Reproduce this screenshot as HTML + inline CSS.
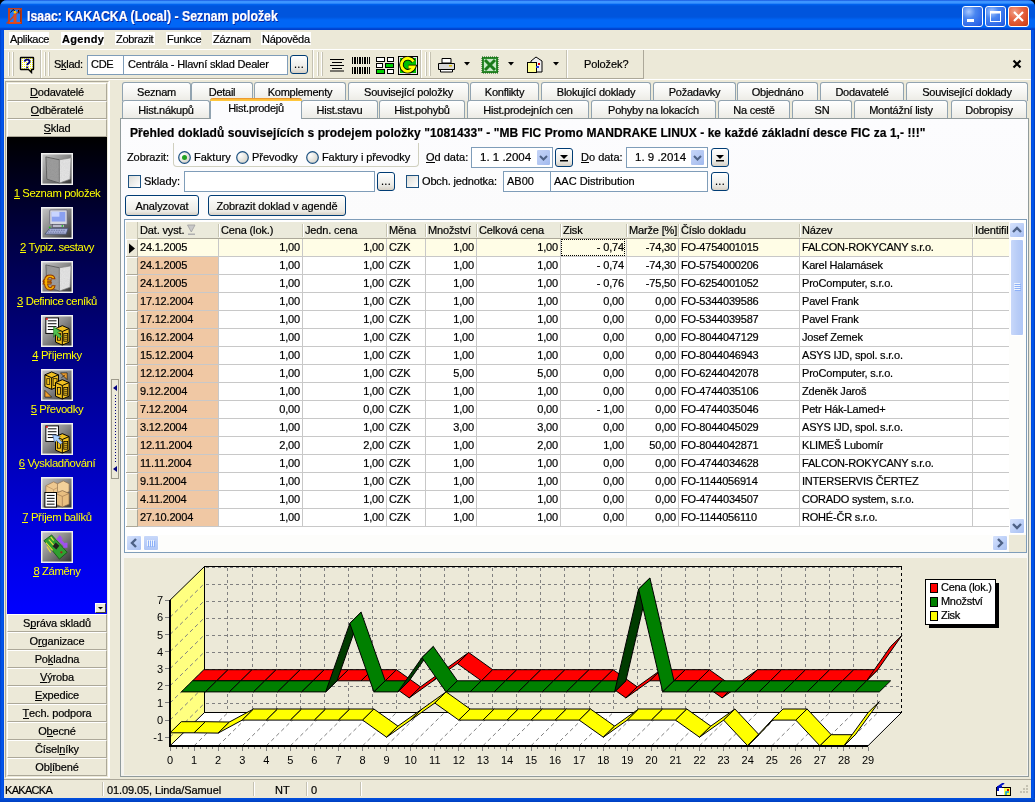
<!DOCTYPE html><html><head><meta charset="utf-8"><style>
*{box-sizing:border-box}
html,body{margin:0;padding:0}
body{width:1035px;height:802px;overflow:hidden;background:#000;font-family:"Liberation Sans",sans-serif;font-size:11px;color:#000;position:relative}
.a{position:absolute}
.t{position:absolute;white-space:nowrap;line-height:13px;-webkit-text-stroke:0.2px currentColor}
u{text-decoration:none;border-bottom:1px solid currentColor;line-height:10px;display:inline-block}
</style></head><body><div style="position:absolute;left:0;top:0;width:1035px;height:802px;will-change:transform"><div class="a" style="left:0px;top:0px;width:1035px;height:802px;background:#0050E6;border-radius:7px 7px 0 0;"></div>
<div class="a" style="left:0px;top:30px;width:4px;height:772px;background:linear-gradient(to right,#0040C8,#0058F0 50%,#0048DC);"></div>
<div class="a" style="left:1031px;top:30px;width:4px;height:772px;background:linear-gradient(to right,#0048DC,#0058F0 50%,#0038B8);"></div>
<div class="a" style="left:0px;top:798px;width:1035px;height:4px;background:linear-gradient(to bottom,#0050E0,#0040C0);"></div>
<div class="a" style="left:0px;top:0px;width:1035px;height:30px;border-radius:7px 7px 0 0;background:linear-gradient(to bottom,#0A3FD4 0px,#3D95FF 1px,#3D95FF 3px,#0062EE 4.5px,#0055DD 6px,#0055DD 17px,#0066F6 20px,#0066F6 27px,#0048D4 28.5px,#003CC8 30px);"></div>
<svg class="a" style="left:0px;top:0px" width="30" height="30" viewBox="0 0 30 30">
<rect x="9" y="8.75" width="12.25" height="14.5" fill="#1F78F8" stroke="#C8401C" stroke-width="1.5"/>
<rect x="8" y="8" width="2" height="16" fill="#C8401C"/><rect x="20" y="8" width="1.5" height="16" fill="#A03010"/>
<path d="M6.5 23.5 L21.5 8.5" stroke="#C8401C" stroke-width="1.2"/>
<path d="M10.5 12.5 L13 9.5 L15 11 M18.5 10 L19 13.5" stroke="#101010" stroke-width="1" fill="none"/>
<rect x="13.5" y="14" width="3" height="9" fill="#E04A20"/><rect x="9" y="22" width="12" height="1.5" fill="#E04A20"/>
<circle cx="15" cy="12.2" r="1.4" fill="#FFD000"/>
</svg>
<div class="t" style="left:27px;top:8px;color:#fff;font-weight:bold;font-size:14px;line-height:17px;transform:scaleX(0.88);transform-origin:0 0;text-shadow:1px 1px 0 #0A1E9C;">Isaac: KAKACKA (Local) - Seznam položek</div>
<div class="a" style="left:962px;top:6px;width:21px;height:21px;border:1px solid #fff;border-radius:3px;background:radial-gradient(circle at 30% 25%,#A8C8FF 0%,#4A86F0 35%,#2A64E8 80%,#1E50D0 100%)"><svg width="21" height="21" style="position:absolute;left:-1px;top:-1px"><rect x="5" y="13" width="7" height="3" fill="#fff"/></svg></div>
<div class="a" style="left:985px;top:6px;width:21px;height:21px;border:1px solid #fff;border-radius:3px;background:radial-gradient(circle at 30% 25%,#A8C8FF 0%,#4A86F0 35%,#2A64E8 80%,#1E50D0 100%)"><svg width="21" height="21" style="position:absolute;left:-1px;top:-1px"><rect x="5.5" y="5.5" width="10" height="10" fill="none" stroke="#fff" stroke-width="1"/><rect x="5" y="5" width="11" height="2.5" fill="#fff"/></svg></div>
<div class="a" style="left:1008px;top:6px;width:21px;height:21px;border:1px solid #fff;border-radius:3px;background:radial-gradient(circle at 30% 25%,#F0A088 0%,#E86A48 35%,#D6471F 80%,#C03A10 100%)"><svg width="21" height="21" style="position:absolute;left:-1px;top:-1px"><path d="M6 6 L15 15 M15 6 L6 15" stroke="#fff" stroke-width="2.2"/></svg></div>
<div class="a" style="left:4px;top:30px;width:1027px;height:768px;background:#ECE9D8;"></div>
<div class="a" style="left:9px;top:32px;width:40px;height:13px;background:#fff;"></div>
<div class="t" style="left:10px;top:33px;letter-spacing:-0.3px;">Aplikace</div>
<div class="a" style="left:61px;top:32px;width:43px;height:13px;background:#fff;"></div>
<div class="t" style="left:62px;top:33px;font-weight:bold;letter-spacing:0.3px;">Agendy</div>
<div class="a" style="left:115px;top:32px;width:40px;height:13px;background:#fff;"></div>
<div class="t" style="left:116px;top:33px;letter-spacing:-0.3px;">Zobrazit</div>
<div class="a" style="left:166px;top:32px;width:35px;height:13px;background:#fff;"></div>
<div class="t" style="left:167px;top:33px;letter-spacing:-0.3px;">Funkce</div>
<div class="a" style="left:212px;top:32px;width:38px;height:13px;background:#fff;"></div>
<div class="t" style="left:213px;top:33px;letter-spacing:-0.3px;">Záznam</div>
<div class="a" style="left:261px;top:32px;width:50px;height:13px;background:#fff;"></div>
<div class="t" style="left:262px;top:33px;letter-spacing:-0.3px;">Nápověda</div>
<div class="a" style="left:4px;top:49px;width:1027px;height:1px;background:#fff;"></div>
<div class="a" style="left:4px;top:78px;width:640px;height:1px;background:#ACA899;"></div>
<div class="a" style="left:4px;top:79px;width:1027px;height:1px;background:#fff;"></div>
<div class="a" style="left:40px;top:50px;width:1px;height:28px;background:#C5C2B2;"></div>
<div class="a" style="left:41px;top:50px;width:1px;height:28px;background:#fff;"></div>
<div class="a" style="left:312px;top:50px;width:1px;height:28px;background:#C5C2B2;"></div>
<div class="a" style="left:313px;top:50px;width:1px;height:28px;background:#fff;"></div>
<div class="a" style="left:420px;top:50px;width:1px;height:28px;background:#C5C2B2;"></div>
<div class="a" style="left:421px;top:50px;width:1px;height:28px;background:#fff;"></div>
<div class="a" style="left:566px;top:50px;width:1px;height:28px;background:#C5C2B2;"></div>
<div class="a" style="left:567px;top:50px;width:1px;height:28px;background:#fff;"></div>
<div class="a" style="left:8px;top:52px;width:2px;height:24px;border-left:1px solid #fff;border-right:1px solid #C5C2B2;"></div>
<div class="a" style="left:12px;top:52px;width:2px;height:24px;border-left:1px solid #fff;border-right:1px solid #C5C2B2;"></div>
<div class="a" style="left:44px;top:52px;width:2px;height:24px;border-left:1px solid #fff;border-right:1px solid #C5C2B2;"></div>
<div class="a" style="left:48px;top:52px;width:2px;height:24px;border-left:1px solid #fff;border-right:1px solid #C5C2B2;"></div>
<div class="a" style="left:317px;top:52px;width:2px;height:24px;border-left:1px solid #fff;border-right:1px solid #C5C2B2;"></div>
<div class="a" style="left:321px;top:52px;width:2px;height:24px;border-left:1px solid #fff;border-right:1px solid #C5C2B2;"></div>
<div class="a" style="left:425px;top:52px;width:2px;height:24px;border-left:1px solid #fff;border-right:1px solid #C5C2B2;"></div>
<div class="a" style="left:429px;top:52px;width:2px;height:24px;border-left:1px solid #fff;border-right:1px solid #C5C2B2;"></div>
<div class="a" style="left:643px;top:50px;width:1px;height:29px;background:#ACA899;"></div>
<svg class="a" style="left:18px;top:54px" width="18" height="20" viewBox="0 0 18 20">
<defs><pattern id="ydots" width="2" height="2" patternUnits="userSpaceOnUse"><rect width="2" height="2" fill="#fff"/><rect x="0" y="0" width="1" height="1" fill="#FFFF00"/></pattern></defs>
<path d="M3 3.5 H15 Q15.5 3.5 15.5 4 V15 Q15.5 15.5 15 15.5 H13.5 L13.5 18.5 L10.5 15.5 H3 Q2.5 15.5 2.5 15 V4 Q2.5 3.5 3 3.5Z" fill="url(#ydots)" stroke="#000" stroke-width="1.4"/>
<path d="M6.6 7.6 Q7 5.6 9.2 5.6 Q11.6 5.6 11.6 7.5 Q11.6 8.8 10 9.6 Q9.2 10.1 9.2 11.3" fill="none" stroke="#000080" stroke-width="1.9"/>
<rect x="8.2" y="12.6" width="2" height="1.6" fill="#000080"/>
</svg>
<div class="t" style="left:54px;top:58px;font-size:11px;letter-spacing:-0.3px;">S<u>k</u>lad:</div>
<div class="a" style="left:87px;top:55px;width:37px;height:20px;background:#fff;border:1px solid #7F9DB9;"></div>
<div class="t" style="left:91px;top:58px;font-size:11px;letter-spacing:-0.3px;">CDE</div>
<div class="a" style="left:123px;top:55px;width:165px;height:20px;background:#fff;border:1px solid #7F9DB9;"></div>
<div class="t" style="left:128px;top:58px;font-size:11px;letter-spacing:-0.2px;">Centrála - Hlavní sklad Dealer</div>
<div class="a" style="left:290px;top:55px;width:18px;height:19px;border:1px solid #003C74;border-radius:3px;background:linear-gradient(to bottom,#fff,#ECEBE6 70%,#D6D0C5);"><div class="t" style="left:0;top:2px;width:16px;text-align:center;font-size:11px;letter-spacing:0.3px">...</div></div>
<svg class="a" style="left:329px;top:58px" width="16" height="14" viewBox="0 0 16 14">
<path d="M1 1.5H15M3 4.5H13M1 7.5H15M3 10.5H13M1 13H15" stroke="#000" stroke-width="1.2"/></svg>
<svg class="a" style="left:351px;top:56px" width="20" height="19" viewBox="0 0 20 19">
<g fill="#000"><rect x="1" y="1" width="1" height="7"/><rect x="3" y="1" width="2" height="7"/><rect x="6" y="1" width="1" height="7"/><rect x="8" y="1" width="2" height="7"/><rect x="11" y="1" width="1" height="7"/><rect x="13" y="1" width="2" height="7"/><rect x="16" y="1" width="1" height="7"/><rect x="18" y="1" width="1" height="7"/>
<rect x="1" y="11" width="1" height="7"/><rect x="3" y="11" width="2" height="7"/><rect x="6" y="11" width="1" height="7"/><rect x="8" y="11" width="2" height="7"/><rect x="11" y="11" width="1" height="7"/><rect x="13" y="11" width="2" height="7"/><rect x="16" y="11" width="1" height="7"/><rect x="18" y="11" width="1" height="7"/></g></svg>
<svg class="a" style="left:375px;top:56px" width="20" height="19" viewBox="0 0 20 19">
<g stroke="#000" stroke-width="1"><rect x="1.5" y="1.5" width="8" height="4" fill="#fff"/><rect x="12.5" y="1.5" width="6" height="4" fill="#fff"/>
<rect x="1.5" y="7.5" width="6" height="4" fill="#fff"/><rect x="10.5" y="7.5" width="8" height="4" fill="#00D000"/>
<rect x="1.5" y="13.5" width="8" height="4" fill="#00D000"/><rect x="12.5" y="13.5" width="6" height="4" fill="#fff"/></g></svg>
<svg class="a" style="left:398px;top:56px" width="20" height="19" viewBox="0 0 20 19">
<rect x="0.5" y="0.5" width="19" height="18" fill="#E8E8E8" stroke="#000"/><rect x="2" y="2" width="16" height="15" fill="#00C000"/>
<path d="M15.5 5.5 A6.5 6.5 0 1 0 16 11 H10.5" fill="none" stroke="#000" stroke-width="4.6"/>
<path d="M15.5 5.5 A6.5 6.5 0 1 0 16 11 H10.5" fill="none" stroke="#FFFF00" stroke-width="2.8"/></svg>
<svg class="a" style="left:437px;top:57px" width="19" height="16" viewBox="0 0 19 16">
<path d="M5 1.5H14V6H5Z" fill="#fff" stroke="#000"/><path d="M1.5 6.5H17.5V12.5H1.5Z" fill="#D8D8D8" stroke="#000"/>
<path d="M3.5 12.5H15.5V15H3.5Z" fill="#fff" stroke="#000"/><rect x="12" y="8" width="3" height="1.5" fill="#E0C000"/></svg>
<svg class="a" style="left:464px;top:62px" width="6" height="4"><path d="M0 0H6L3 3.5Z" fill="#000"/></svg>
<svg class="a" style="left:508px;top:62px" width="6" height="4"><path d="M0 0H6L3 3.5Z" fill="#000"/></svg>
<svg class="a" style="left:553px;top:62px" width="6" height="4"><path d="M0 0H6L3 3.5Z" fill="#000"/></svg>
<svg class="a" style="left:481px;top:56px" width="18" height="18" viewBox="0 0 18 18">
<rect x="1" y="1" width="16" height="16" fill="#2A8A2A" stroke="#0A5A0A" stroke-dasharray="1 1"/><rect x="3" y="3" width="12" height="12" fill="#C8E8C8"/>
<path d="M4 4L14 14M14 4L4 14" stroke="#1A7A1A" stroke-width="3"/></svg>
<svg class="a" style="left:526px;top:56px" width="17" height="18" viewBox="0 0 17 18">
<path d="M5 5L10 1L16 5V16H5Z" fill="#F0F0F0" stroke="#000"/><rect x="1.5" y="6.5" width="9" height="10" fill="#FFFF90" stroke="#000"/>
<rect x="12" y="7" width="2" height="2" fill="#E00000"/><rect x="10" y="10" width="3" height="2" fill="#2040E0"/></svg>
<div class="t" style="left:584px;top:58px;font-size:11px;letter-spacing:-0.1px;">Položek?</div>
<svg class="a" style="left:1012px;top:59px" width="10" height="10" viewBox="0 0 10 10"><path d="M1.5 1.5L8.5 8.5M8.5 1.5L1.5 8.5" stroke="#000" stroke-width="2.2"/></svg>
<div class="a" style="left:4px;top:779px;width:1027px;height:1px;background:#ACA899;"></div>
<div class="a" style="left:4px;top:780px;width:1027px;height:18px;background:#ECE9D8;"></div>
<div class="a" style="left:102px;top:782px;width:1px;height:14px;background:#C5C2B2;"></div>
<div class="a" style="left:103px;top:782px;width:1px;height:14px;background:#fff;"></div>
<div class="a" style="left:253px;top:782px;width:1px;height:14px;background:#C5C2B2;"></div>
<div class="a" style="left:254px;top:782px;width:1px;height:14px;background:#fff;"></div>
<div class="a" style="left:306px;top:782px;width:1px;height:14px;background:#C5C2B2;"></div>
<div class="a" style="left:307px;top:782px;width:1px;height:14px;background:#fff;"></div>
<div class="a" style="left:360px;top:782px;width:1px;height:14px;background:#C5C2B2;"></div>
<div class="a" style="left:361px;top:782px;width:1px;height:14px;background:#fff;"></div>
<div class="t" style="left:5px;top:784px;font-size:11px;letter-spacing:-0.7px;">KAKACKA</div>
<div class="t" style="left:107px;top:784px;font-size:11px;letter-spacing:-0.1px;">01.09.05, Linda/Samuel</div>
<div class="t" style="left:275px;top:784px;font-size:11px;">NT</div>
<div class="t" style="left:311px;top:784px;font-size:11px;">0</div>
<svg class="a" style="left:995px;top:783px" width="17" height="13" viewBox="0 0 17 13">
<rect x="1.5" y="4.5" width="14" height="8" fill="#fff" stroke="#000"/><rect x="9" y="5" width="6" height="7" fill="#FFFF40"/><rect x="12" y="6" width="2" height="2" fill="#E00000"/>
<path d="M3 8 L3 4 L7 4 M3 4 L9 0" stroke="#0010C0" stroke-width="2" fill="none"/><path d="M11 12V9H14" stroke="#00A0E0" stroke-width="1.5" fill="none"/></svg>
<svg class="a" style="left:1017px;top:784px" width="13" height="13"><rect x="9" y="1" width="2" height="2" fill="#C5C2B2"/><rect x="6" y="4" width="2" height="2" fill="#C5C2B2"/><rect x="9" y="4" width="2" height="2" fill="#C5C2B2"/><rect x="3" y="7" width="2" height="2" fill="#C5C2B2"/><rect x="6" y="7" width="2" height="2" fill="#C5C2B2"/><rect x="9" y="7" width="2" height="2" fill="#C5C2B2"/></svg>
<div class="a" style="left:5px;top:81px;width:104px;height:697px;border:1px solid #ACA899;border-right-color:#fff;border-bottom-color:#fff;background:#ECE9D8;"></div>
<div class="a" style="left:7px;top:83px;width:100px;height:18px;background:#ECE9D8;border-top:1px solid #fff;border-left:1px solid #fff;border-bottom:1px solid #ACA899;border-right:1px solid #ACA899;"></div>
<div class="t" style="left:7px;top:86px;width:100px;text-align:center;font-size:11px;letter-spacing:-0.15px;"><u>D</u>odavatelé</div>
<div class="a" style="left:7px;top:101px;width:100px;height:18px;background:#ECE9D8;border-top:1px solid #fff;border-left:1px solid #fff;border-bottom:1px solid #ACA899;border-right:1px solid #ACA899;"></div>
<div class="t" style="left:7px;top:104px;width:100px;text-align:center;font-size:11px;letter-spacing:-0.15px;"><u>O</u>dběratelé</div>
<div class="a" style="left:7px;top:119px;width:100px;height:18px;background:#ECE9D8;border-top:1px solid #fff;border-left:1px solid #fff;border-bottom:1px solid #ACA899;border-right:1px solid #ACA899;"></div>
<div class="t" style="left:7px;top:122px;width:100px;text-align:center;font-size:11px;letter-spacing:-0.15px;"><u>S</u>klad</div>
<div class="a" style="left:7px;top:137px;width:100px;height:477px;background:linear-gradient(to bottom,#000000 0%,#000040 20%,#000090 50%,#0000D8 80%,#0000FF 100%);"></div>
<svg class="a" style="left:41px;top:153px" width="32" height="32" viewBox="0 0 33 33"><defs><linearGradient id="ibg" x1="0" y1="0" x2="1" y2="1"><stop offset="0" stop-color="#C8C8C8"/><stop offset="0.45" stop-color="#8C8C8C"/><stop offset="1" stop-color="#303030"/></linearGradient><filter id="noise"><feTurbulence type="fractalNoise" baseFrequency="0.9" numOctaves="1" result="n"/><feColorMatrix in="n" type="matrix" values="0 0 0 0 0.5  0 0 0 0 0.5  0 0 0 0 0.5  0 0 0 0.35 0"/><feComposite in2="SourceGraphic" operator="in"/><feBlend in2="SourceGraphic" mode="multiply"/></filter></defs><rect x="0.75" y="0.75" width="31.5" height="31.5" fill="url(#ibg)" stroke="#F0F0F0" stroke-width="1.5"/><g filter="url(#noise)"><path d="M5 4 L19 7 L19 31 L6 27Z" fill="#A0A0A0" stroke="#505050" stroke-width="0.8"/><path d="M19 7 L31 5 L30 27 L19 31Z" fill="#E8E8E8" stroke="#707070" stroke-width="0.6"/></g></svg>
<div class="t" style="left:7px;top:187px;width:100px;text-align:center;color:#FFFF00;font-size:11.3px;letter-spacing:-0.4px;-webkit-text-stroke:0;"><u>1</u> Seznam položek</div>
<svg class="a" style="left:41px;top:207px" width="32" height="32" viewBox="0 0 33 33"><defs><linearGradient id="ibg" x1="0" y1="0" x2="1" y2="1"><stop offset="0" stop-color="#C8C8C8"/><stop offset="0.45" stop-color="#8C8C8C"/><stop offset="1" stop-color="#303030"/></linearGradient><filter id="noise"><feTurbulence type="fractalNoise" baseFrequency="0.9" numOctaves="1" result="n"/><feColorMatrix in="n" type="matrix" values="0 0 0 0 0.5  0 0 0 0 0.5  0 0 0 0 0.5  0 0 0 0.35 0"/><feComposite in2="SourceGraphic" operator="in"/><feBlend in2="SourceGraphic" mode="multiply"/></filter></defs><rect x="0.75" y="0.75" width="31.5" height="31.5" fill="url(#ibg)" stroke="#F0F0F0" stroke-width="1.5"/><rect x="9" y="3" width="18" height="15" rx="1" fill="#D8D8E0" stroke="#606070" stroke-width="0.8"/><rect x="11" y="5" width="14" height="10" fill="#8AA0F0"/><rect x="11" y="5" width="8" height="5" fill="#C8D4FF"/><rect x="12" y="18" width="12" height="3" fill="#B8B8C8" stroke="#505060" stroke-width="0.6"/><circle cx="22" cy="19.5" r="0.9" fill="#20C020"/><path d="M4 28 L9 22 L28 22 L26 28Z" fill="#A8B0D8" stroke="#404868" stroke-width="0.8"/><path d="M8 24H25M7 26H25" stroke="#606890" stroke-width="0.8" stroke-dasharray="1.5 1"/><circle cx="9" cy="21" r="1" fill="#20C020"/></svg>
<div class="t" style="left:7px;top:241px;width:100px;text-align:center;color:#FFFF00;font-size:11.3px;letter-spacing:-0.4px;-webkit-text-stroke:0;"><u>2</u> Typiz. sestavy</div>
<svg class="a" style="left:41px;top:261px" width="32" height="32" viewBox="0 0 33 33"><defs><linearGradient id="ibg" x1="0" y1="0" x2="1" y2="1"><stop offset="0" stop-color="#C8C8C8"/><stop offset="0.45" stop-color="#8C8C8C"/><stop offset="1" stop-color="#303030"/></linearGradient><filter id="noise"><feTurbulence type="fractalNoise" baseFrequency="0.9" numOctaves="1" result="n"/><feColorMatrix in="n" type="matrix" values="0 0 0 0 0.5  0 0 0 0 0.5  0 0 0 0 0.5  0 0 0 0.35 0"/><feComposite in2="SourceGraphic" operator="in"/><feBlend in2="SourceGraphic" mode="multiply"/></filter></defs><rect x="0.75" y="0.75" width="31.5" height="31.5" fill="url(#ibg)" stroke="#F0F0F0" stroke-width="1.5"/><g filter="url(#noise)"><path d="M5 4 L19 7 L19 31 L6 27Z" fill="#A0A0A0" stroke="#505050" stroke-width="0.8"/><path d="M19 7 L31 5 L30 27 L19 31Z" fill="#E8E8E8" stroke="#707070" stroke-width="0.6"/></g><text x="2" y="30" font-family="Liberation Sans" font-weight="bold" font-size="23" fill="#F8B000" stroke="#903800" stroke-width="1">€</text></svg>
<div class="t" style="left:7px;top:295px;width:100px;text-align:center;color:#FFFF00;font-size:11.3px;letter-spacing:-0.4px;-webkit-text-stroke:0;"><u>3</u> Definice ceníků</div>
<svg class="a" style="left:41px;top:315px" width="32" height="32" viewBox="0 0 33 33"><defs><linearGradient id="ibg" x1="0" y1="0" x2="1" y2="1"><stop offset="0" stop-color="#C8C8C8"/><stop offset="0.45" stop-color="#8C8C8C"/><stop offset="1" stop-color="#303030"/></linearGradient><filter id="noise"><feTurbulence type="fractalNoise" baseFrequency="0.9" numOctaves="1" result="n"/><feColorMatrix in="n" type="matrix" values="0 0 0 0 0.5  0 0 0 0 0.5  0 0 0 0 0.5  0 0 0 0.35 0"/><feComposite in2="SourceGraphic" operator="in"/><feBlend in2="SourceGraphic" mode="multiply"/></filter></defs><rect x="0.75" y="0.75" width="31.5" height="31.5" fill="url(#ibg)" stroke="#F0F0F0" stroke-width="1.5"/><rect x="5" y="3" width="13" height="16" fill="#fff" stroke="#000" stroke-width="1"/><path d="M7 6H16M7 9H16M7 12H16M7 15H16" stroke="#000" stroke-width="1"/><rect x="5" y="3" width="2" height="2" fill="#E02020"/><path d="M15 14 L22 11 L29 14 L29 28 L22 31 L15 28Z" fill="#F0C020" stroke="#000" stroke-width="1"/><path d="M15 14L22 17L29 14M22 17V31" stroke="#000" stroke-width="1" fill="none"/><rect x="23.5" y="19" width="4" height="8" fill="none" stroke="#000" stroke-width="0.8"/><path d="M24 21H27M24 23H27M24 25H27" stroke="#000" stroke-width="0.7"/><rect x="17" y="19" width="3" height="7" fill="none" stroke="#000" stroke-width="0.8"/><path d="M13 12 L20 17 L17 18 L21 22 L19 24 L15 20 L13 23Z" fill="#50C050" stroke="#207020" stroke-width="0.6"/></svg>
<div class="t" style="left:7px;top:349px;width:100px;text-align:center;color:#FFFF00;font-size:11.3px;letter-spacing:-0.4px;-webkit-text-stroke:0;"><u>4</u> Příjemky</div>
<svg class="a" style="left:41px;top:369px" width="32" height="32" viewBox="0 0 33 33"><defs><linearGradient id="ibg" x1="0" y1="0" x2="1" y2="1"><stop offset="0" stop-color="#C8C8C8"/><stop offset="0.45" stop-color="#8C8C8C"/><stop offset="1" stop-color="#303030"/></linearGradient><filter id="noise"><feTurbulence type="fractalNoise" baseFrequency="0.9" numOctaves="1" result="n"/><feColorMatrix in="n" type="matrix" values="0 0 0 0 0.5  0 0 0 0 0.5  0 0 0 0 0.5  0 0 0 0.35 0"/><feComposite in2="SourceGraphic" operator="in"/><feBlend in2="SourceGraphic" mode="multiply"/></filter></defs><rect x="0.75" y="0.75" width="31.5" height="31.5" fill="url(#ibg)" stroke="#F0F0F0" stroke-width="1.5"/><path d="M4 6 L11 3 L18 6 L18 18 L11 21 L4 18Z" fill="#F0C020" stroke="#000" stroke-width="1"/><path d="M4 6L11 9L18 6M11 9V21" stroke="#000" stroke-width="1" fill="none"/><rect x="6" y="10" width="3" height="6" fill="none" stroke="#000" stroke-width="0.7"/><rect x="12.5" y="10" width="4" height="7" fill="none" stroke="#000" stroke-width="0.7"/><path d="M15 14 L22 11 L29 14 L29 28 L22 31 L15 28Z" fill="#F0C020" stroke="#000" stroke-width="1"/><path d="M15 14L22 17L29 14M22 17V31" stroke="#000" stroke-width="1" fill="none"/><rect x="23.5" y="19" width="4" height="8" fill="none" stroke="#000" stroke-width="0.8"/><path d="M24 21H27M24 23H27M24 25H27" stroke="#000" stroke-width="0.7"/><rect x="17" y="19" width="3" height="7" fill="none" stroke="#000" stroke-width="0.8"/><path d="M20 4 L27 4 L27 11Z M21 9 L25 6" fill="#F0A030" stroke="#000" stroke-width="0.6"/><path d="M4 22 L11 29 L4 29Z" fill="#F0A030" stroke="#000" stroke-width="0.6"/></svg>
<div class="t" style="left:7px;top:403px;width:100px;text-align:center;color:#FFFF00;font-size:11.3px;letter-spacing:-0.4px;-webkit-text-stroke:0;"><u>5</u> Převodky</div>
<svg class="a" style="left:41px;top:423px" width="32" height="32" viewBox="0 0 33 33"><defs><linearGradient id="ibg" x1="0" y1="0" x2="1" y2="1"><stop offset="0" stop-color="#C8C8C8"/><stop offset="0.45" stop-color="#8C8C8C"/><stop offset="1" stop-color="#303030"/></linearGradient><filter id="noise"><feTurbulence type="fractalNoise" baseFrequency="0.9" numOctaves="1" result="n"/><feColorMatrix in="n" type="matrix" values="0 0 0 0 0.5  0 0 0 0 0.5  0 0 0 0 0.5  0 0 0 0.35 0"/><feComposite in2="SourceGraphic" operator="in"/><feBlend in2="SourceGraphic" mode="multiply"/></filter></defs><rect x="0.75" y="0.75" width="31.5" height="31.5" fill="url(#ibg)" stroke="#F0F0F0" stroke-width="1.5"/><rect x="5" y="3" width="13" height="16" fill="#fff" stroke="#000" stroke-width="1"/><path d="M7 6H16M7 9H16M7 12H16M7 15H16" stroke="#000" stroke-width="1"/><rect x="5" y="3" width="2" height="2" fill="#E02020"/><path d="M15 14 L22 11 L29 14 L29 28 L22 31 L15 28Z" fill="#F0C020" stroke="#000" stroke-width="1"/><path d="M15 14L22 17L29 14M22 17V31" stroke="#000" stroke-width="1" fill="none"/><rect x="23.5" y="19" width="4" height="8" fill="none" stroke="#000" stroke-width="0.8"/><path d="M24 21H27M24 23H27M24 25H27" stroke="#000" stroke-width="0.7"/><rect x="17" y="19" width="3" height="7" fill="none" stroke="#000" stroke-width="0.8"/><path d="M12 12 L20 14 L18 16 L22 20 L20 22 L16 18 L14 20Z" fill="#A8D0FF" stroke="#304880" stroke-width="0.6"/></svg>
<div class="t" style="left:7px;top:457px;width:100px;text-align:center;color:#FFFF00;font-size:11.3px;letter-spacing:-0.4px;-webkit-text-stroke:0;"><u>6</u> Vyskladňování</div>
<svg class="a" style="left:41px;top:477px" width="32" height="32" viewBox="0 0 33 33"><defs><linearGradient id="ibg" x1="0" y1="0" x2="1" y2="1"><stop offset="0" stop-color="#C8C8C8"/><stop offset="0.45" stop-color="#8C8C8C"/><stop offset="1" stop-color="#303030"/></linearGradient><filter id="noise"><feTurbulence type="fractalNoise" baseFrequency="0.9" numOctaves="1" result="n"/><feColorMatrix in="n" type="matrix" values="0 0 0 0 0.5  0 0 0 0 0.5  0 0 0 0 0.5  0 0 0 0.35 0"/><feComposite in2="SourceGraphic" operator="in"/><feBlend in2="SourceGraphic" mode="multiply"/></filter></defs><rect x="0.75" y="0.75" width="31.5" height="31.5" fill="url(#ibg)" stroke="#F0F0F0" stroke-width="1.5"/><path d="M5 9 L13 5 L21 9 L21 18 L13 22 L5 18Z" fill="#EEC890" stroke="#907050" stroke-width="0.7"/><path d="M5 9L13 13L21 9M13 13V22" stroke="#B89060" stroke-width="0.7" fill="none"/><path d="M17 7 L23 4 L29 7 L29 15 L23 18 L17 15Z" fill="#F2D09A" stroke="#907050" stroke-width="0.7"/><path d="M15 17 L22 14 L29 17 L29 28 L22 31 L15 28Z" fill="#E8BE80" stroke="#806040" stroke-width="0.7"/><path d="M15 17L22 20L29 17M22 20V31" stroke="#A07850" stroke-width="0.7" fill="none"/><rect x="4" y="16" width="12" height="15" fill="#fff" stroke="#000" stroke-width="1"/><path d="M6 19H14M6 22H14M6 25H14M6 28H14" stroke="#000" stroke-width="1"/></svg>
<div class="t" style="left:7px;top:511px;width:100px;text-align:center;color:#FFFF00;font-size:11.3px;letter-spacing:-0.4px;-webkit-text-stroke:0;"><u>7</u> Příjem balíků</div>
<svg class="a" style="left:41px;top:531px" width="32" height="32" viewBox="0 0 33 33"><defs><linearGradient id="ibg" x1="0" y1="0" x2="1" y2="1"><stop offset="0" stop-color="#C8C8C8"/><stop offset="0.45" stop-color="#8C8C8C"/><stop offset="1" stop-color="#303030"/></linearGradient><filter id="noise"><feTurbulence type="fractalNoise" baseFrequency="0.9" numOctaves="1" result="n"/><feColorMatrix in="n" type="matrix" values="0 0 0 0 0.5  0 0 0 0 0.5  0 0 0 0 0.5  0 0 0 0.35 0"/><feComposite in2="SourceGraphic" operator="in"/><feBlend in2="SourceGraphic" mode="multiply"/></filter></defs><rect x="0.75" y="0.75" width="31.5" height="31.5" fill="url(#ibg)" stroke="#F0F0F0" stroke-width="1.5"/><path d="M3 10 L11 4 L27 22 L19 29Z" fill="#30A030" stroke="#105010" stroke-width="0.8"/><path d="M5 12L12 20M8 9L15 17M6 16L10 22M10 6L13 10" stroke="#E8E040" stroke-width="1.2"/><rect x="13" y="13" width="5" height="5" fill="#202020" transform="rotate(40 15.5 15.5)"/><circle cx="21" cy="22" r="1.2" fill="#A02020"/><path d="M18 8 L26 16 M20 5 L18 8 L22 8 M26 12 L26 16 L23 16" stroke="#A050F0" stroke-width="2.6" fill="none"/></svg>
<div class="t" style="left:7px;top:565px;width:100px;text-align:center;color:#FFFF00;font-size:11.3px;letter-spacing:-0.4px;-webkit-text-stroke:0;"><u>8</u> Záměny</div>
<div class="a" style="left:95px;top:603px;width:11px;height:10px;background:#ECE9D8;border:1px solid #fff;border-right-color:#404040;border-bottom-color:#404040;"><svg width="9" height="8" style="position:absolute;left:0;top:0"><path d="M2 3H7L4.5 5.5Z" fill="#000"/></svg></div>
<div class="a" style="left:7px;top:614px;width:100px;height:18px;background:#ECE9D8;border-top:1px solid #fff;border-left:1px solid #fff;border-bottom:1px solid #ACA899;border-right:1px solid #ACA899;"></div>
<div class="t" style="left:7px;top:617px;width:100px;text-align:center;font-size:11px;letter-spacing:-0.15px;">S<u>p</u>ráva skladů</div>
<div class="a" style="left:7px;top:632px;width:100px;height:18px;background:#ECE9D8;border-top:1px solid #fff;border-left:1px solid #fff;border-bottom:1px solid #ACA899;border-right:1px solid #ACA899;"></div>
<div class="t" style="left:7px;top:635px;width:100px;text-align:center;font-size:11px;letter-spacing:-0.15px;">O<u>r</u>ganizace</div>
<div class="a" style="left:7px;top:650px;width:100px;height:18px;background:#ECE9D8;border-top:1px solid #fff;border-left:1px solid #fff;border-bottom:1px solid #ACA899;border-right:1px solid #ACA899;"></div>
<div class="t" style="left:7px;top:653px;width:100px;text-align:center;font-size:11px;letter-spacing:-0.15px;">Po<u>k</u>ladna</div>
<div class="a" style="left:7px;top:668px;width:100px;height:18px;background:#ECE9D8;border-top:1px solid #fff;border-left:1px solid #fff;border-bottom:1px solid #ACA899;border-right:1px solid #ACA899;"></div>
<div class="t" style="left:7px;top:671px;width:100px;text-align:center;font-size:11px;letter-spacing:-0.15px;"><u>V</u>ýroba</div>
<div class="a" style="left:7px;top:686px;width:100px;height:18px;background:#ECE9D8;border-top:1px solid #fff;border-left:1px solid #fff;border-bottom:1px solid #ACA899;border-right:1px solid #ACA899;"></div>
<div class="t" style="left:7px;top:689px;width:100px;text-align:center;font-size:11px;letter-spacing:-0.15px;"><u>E</u>xpedice</div>
<div class="a" style="left:7px;top:704px;width:100px;height:18px;background:#ECE9D8;border-top:1px solid #fff;border-left:1px solid #fff;border-bottom:1px solid #ACA899;border-right:1px solid #ACA899;"></div>
<div class="t" style="left:7px;top:707px;width:100px;text-align:center;font-size:11px;letter-spacing:-0.15px;"><u>T</u>ech. podpora</div>
<div class="a" style="left:7px;top:722px;width:100px;height:18px;background:#ECE9D8;border-top:1px solid #fff;border-left:1px solid #fff;border-bottom:1px solid #ACA899;border-right:1px solid #ACA899;"></div>
<div class="t" style="left:7px;top:725px;width:100px;text-align:center;font-size:11px;letter-spacing:-0.15px;">O<u>b</u>ecné</div>
<div class="a" style="left:7px;top:740px;width:100px;height:18px;background:#ECE9D8;border-top:1px solid #fff;border-left:1px solid #fff;border-bottom:1px solid #ACA899;border-right:1px solid #ACA899;"></div>
<div class="t" style="left:7px;top:743px;width:100px;text-align:center;font-size:11px;letter-spacing:-0.15px;">Čísel<u>n</u>íky</div>
<div class="a" style="left:7px;top:758px;width:100px;height:18px;background:#ECE9D8;border-top:1px solid #fff;border-left:1px solid #fff;border-bottom:1px solid #ACA899;border-right:1px solid #ACA899;"></div>
<div class="t" style="left:7px;top:761px;width:100px;text-align:center;font-size:11px;letter-spacing:-0.15px;">Ob<u>l</u>íbené</div>
<div class="a" style="left:109px;top:81px;width:1px;height:697px;background:#fff;"></div>
<div class="a" style="left:111px;top:379px;width:8px;height:100px;border:1px solid #9D9A8A;background:#ECE9D8;"><svg width="6" height="98" style="position:absolute;left:0;top:0"><path d="M5 5V11L1 8Z" fill="#000080"/><path d="M5 86V92L1 89Z" fill="#000080"/><rect x="3" y="15" width="1" height="1" fill="#000080"/><rect x="3" y="18" width="1" height="1" fill="#000080"/><rect x="3" y="21" width="1" height="1" fill="#000080"/><rect x="3" y="24" width="1" height="1" fill="#000080"/><rect x="3" y="27" width="1" height="1" fill="#000080"/><rect x="3" y="30" width="1" height="1" fill="#000080"/><rect x="3" y="33" width="1" height="1" fill="#000080"/><rect x="3" y="36" width="1" height="1" fill="#000080"/><rect x="3" y="39" width="1" height="1" fill="#000080"/><rect x="3" y="42" width="1" height="1" fill="#000080"/><rect x="3" y="45" width="1" height="1" fill="#000080"/><rect x="3" y="48" width="1" height="1" fill="#000080"/><rect x="3" y="51" width="1" height="1" fill="#000080"/><rect x="3" y="54" width="1" height="1" fill="#000080"/><rect x="3" y="57" width="1" height="1" fill="#000080"/><rect x="3" y="60" width="1" height="1" fill="#000080"/><rect x="3" y="63" width="1" height="1" fill="#000080"/><rect x="3" y="66" width="1" height="1" fill="#000080"/><rect x="3" y="69" width="1" height="1" fill="#000080"/><rect x="3" y="72" width="1" height="1" fill="#000080"/><rect x="3" y="75" width="1" height="1" fill="#000080"/><rect x="3" y="78" width="1" height="1" fill="#000080"/><rect x="3" y="81" width="1" height="1" fill="#000080"/></svg></div>
<div class="a" style="left:120px;top:118px;width:909px;height:659px;border:1px solid #919B9C;background:linear-gradient(to bottom,#FCFCFE 0%,#F8F8F6 60%,#F4F3EE 100%);"></div>
<div class="a" style="left:122px;top:82px;width:69px;height:19px;border:1px solid #91A3B0;border-bottom:none;border-radius:3px 3px 0 0;background:linear-gradient(to bottom,#FFFFFF 0%,#F6F6F3 50%,#ECEBE5 100%);"></div>
<div class="t" style="left:122px;top:86px;width:69px;text-align:center;font-size:11px;letter-spacing:-0.25px;">Seznam</div>
<div class="a" style="left:191px;top:82px;width:62px;height:19px;border:1px solid #91A3B0;border-bottom:none;border-radius:3px 3px 0 0;background:linear-gradient(to bottom,#FFFFFF 0%,#F6F6F3 50%,#ECEBE5 100%);"></div>
<div class="t" style="left:191px;top:86px;width:62px;text-align:center;font-size:11px;letter-spacing:-0.25px;">Detail</div>
<div class="a" style="left:254px;top:82px;width:92px;height:19px;border:1px solid #91A3B0;border-bottom:none;border-radius:3px 3px 0 0;background:linear-gradient(to bottom,#FFFFFF 0%,#F6F6F3 50%,#ECEBE5 100%);"></div>
<div class="t" style="left:254px;top:86px;width:92px;text-align:center;font-size:11px;letter-spacing:-0.25px;">Komplementy</div>
<div class="a" style="left:348px;top:82px;width:121px;height:19px;border:1px solid #91A3B0;border-bottom:none;border-radius:3px 3px 0 0;background:linear-gradient(to bottom,#FFFFFF 0%,#F6F6F3 50%,#ECEBE5 100%);"></div>
<div class="t" style="left:348px;top:86px;width:121px;text-align:center;font-size:11px;letter-spacing:-0.25px;">Související položky</div>
<div class="a" style="left:470px;top:82px;width:69px;height:19px;border:1px solid #91A3B0;border-bottom:none;border-radius:3px 3px 0 0;background:linear-gradient(to bottom,#FFFFFF 0%,#F6F6F3 50%,#ECEBE5 100%);"></div>
<div class="t" style="left:470px;top:86px;width:69px;text-align:center;font-size:11px;letter-spacing:-0.25px;">Konflikty</div>
<div class="a" style="left:541px;top:82px;width:110px;height:19px;border:1px solid #91A3B0;border-bottom:none;border-radius:3px 3px 0 0;background:linear-gradient(to bottom,#FFFFFF 0%,#F6F6F3 50%,#ECEBE5 100%);"></div>
<div class="t" style="left:541px;top:86px;width:110px;text-align:center;font-size:11px;letter-spacing:-0.25px;">Blokující doklady</div>
<div class="a" style="left:653px;top:82px;width:83px;height:19px;border:1px solid #91A3B0;border-bottom:none;border-radius:3px 3px 0 0;background:linear-gradient(to bottom,#FFFFFF 0%,#F6F6F3 50%,#ECEBE5 100%);"></div>
<div class="t" style="left:653px;top:86px;width:83px;text-align:center;font-size:11px;letter-spacing:-0.25px;">Požadavky</div>
<div class="a" style="left:737px;top:82px;width:81px;height:19px;border:1px solid #91A3B0;border-bottom:none;border-radius:3px 3px 0 0;background:linear-gradient(to bottom,#FFFFFF 0%,#F6F6F3 50%,#ECEBE5 100%);"></div>
<div class="t" style="left:737px;top:86px;width:81px;text-align:center;font-size:11px;letter-spacing:-0.25px;">Objednáno</div>
<div class="a" style="left:820px;top:82px;width:84px;height:19px;border:1px solid #91A3B0;border-bottom:none;border-radius:3px 3px 0 0;background:linear-gradient(to bottom,#FFFFFF 0%,#F6F6F3 50%,#ECEBE5 100%);"></div>
<div class="t" style="left:820px;top:86px;width:84px;text-align:center;font-size:11px;letter-spacing:-0.25px;">Dodavatelé</div>
<div class="a" style="left:906px;top:82px;width:122px;height:19px;border:1px solid #91A3B0;border-bottom:none;border-radius:3px 3px 0 0;background:linear-gradient(to bottom,#FFFFFF 0%,#F6F6F3 50%,#ECEBE5 100%);"></div>
<div class="t" style="left:906px;top:86px;width:122px;text-align:center;font-size:11px;letter-spacing:-0.25px;">Související doklady</div>
<div class="a" style="left:122px;top:100px;width:88px;height:18px;border:1px solid #91A3B0;border-bottom:none;border-radius:3px 3px 0 0;background:linear-gradient(to bottom,#FFFFFF 0%,#F6F6F3 50%,#ECEBE5 100%);"></div>
<div class="t" style="left:122px;top:104px;width:88px;text-align:center;font-size:11px;letter-spacing:-0.25px;">Hist.nákupů</div>
<div class="a" style="left:301px;top:100px;width:77px;height:18px;border:1px solid #91A3B0;border-bottom:none;border-radius:3px 3px 0 0;background:linear-gradient(to bottom,#FFFFFF 0%,#F6F6F3 50%,#ECEBE5 100%);"></div>
<div class="t" style="left:301px;top:104px;width:77px;text-align:center;font-size:11px;letter-spacing:-0.25px;">Hist.stavu</div>
<div class="a" style="left:379px;top:100px;width:86px;height:18px;border:1px solid #91A3B0;border-bottom:none;border-radius:3px 3px 0 0;background:linear-gradient(to bottom,#FFFFFF 0%,#F6F6F3 50%,#ECEBE5 100%);"></div>
<div class="t" style="left:379px;top:104px;width:86px;text-align:center;font-size:11px;letter-spacing:-0.25px;">Hist.pohybů</div>
<div class="a" style="left:467px;top:100px;width:122px;height:18px;border:1px solid #91A3B0;border-bottom:none;border-radius:3px 3px 0 0;background:linear-gradient(to bottom,#FFFFFF 0%,#F6F6F3 50%,#ECEBE5 100%);"></div>
<div class="t" style="left:467px;top:104px;width:122px;text-align:center;font-size:11px;letter-spacing:-0.25px;">Hist.prodejních cen</div>
<div class="a" style="left:591px;top:100px;width:125px;height:18px;border:1px solid #91A3B0;border-bottom:none;border-radius:3px 3px 0 0;background:linear-gradient(to bottom,#FFFFFF 0%,#F6F6F3 50%,#ECEBE5 100%);"></div>
<div class="t" style="left:591px;top:104px;width:125px;text-align:center;font-size:11px;letter-spacing:-0.25px;">Pohyby na lokacích</div>
<div class="a" style="left:718px;top:100px;width:72px;height:18px;border:1px solid #91A3B0;border-bottom:none;border-radius:3px 3px 0 0;background:linear-gradient(to bottom,#FFFFFF 0%,#F6F6F3 50%,#ECEBE5 100%);"></div>
<div class="t" style="left:718px;top:104px;width:72px;text-align:center;font-size:11px;letter-spacing:-0.25px;">Na cestě</div>
<div class="a" style="left:792px;top:100px;width:60px;height:18px;border:1px solid #91A3B0;border-bottom:none;border-radius:3px 3px 0 0;background:linear-gradient(to bottom,#FFFFFF 0%,#F6F6F3 50%,#ECEBE5 100%);"></div>
<div class="t" style="left:792px;top:104px;width:60px;text-align:center;font-size:11px;letter-spacing:-0.25px;">SN</div>
<div class="a" style="left:854px;top:100px;width:94px;height:18px;border:1px solid #91A3B0;border-bottom:none;border-radius:3px 3px 0 0;background:linear-gradient(to bottom,#FFFFFF 0%,#F6F6F3 50%,#ECEBE5 100%);"></div>
<div class="t" style="left:854px;top:104px;width:94px;text-align:center;font-size:11px;letter-spacing:-0.25px;">Montážní listy</div>
<div class="a" style="left:951px;top:100px;width:76px;height:18px;border:1px solid #91A3B0;border-bottom:none;border-radius:3px 3px 0 0;background:linear-gradient(to bottom,#FFFFFF 0%,#F6F6F3 50%,#ECEBE5 100%);"></div>
<div class="t" style="left:951px;top:104px;width:76px;text-align:center;font-size:11px;letter-spacing:-0.25px;">Dobropisy</div>
<div class="a" style="left:210px;top:98px;width:92px;height:21px;border:1px solid #91A3B0;border-bottom:none;border-top:none;border-radius:3px 3px 0 0;background:#FCFCFE;"></div>
<div class="a" style="left:210px;top:98px;width:92px;height:3px;border-radius:3px 3px 0 0;background:linear-gradient(to bottom,#E68B2C,#FFC73C 60%,#FFC73C);"></div>
<div class="t" style="left:210px;top:102px;width:92px;text-align:center;font-size:11px;letter-spacing:-0.25px;">Hist.prodejů</div>
<div class="t" style="left:130px;top:127px;font-weight:bold;font-size:12px;letter-spacing:0.07px;">Přehled dokladů souvisejících s prodejem položky "1081433" - "MB FIC Promo MANDRAKE LINUX - ke každé základní desce FIC za 1,- !!!"</div>
<div class="t" style="left:127px;top:151px;font-size:11px;letter-spacing:-0.1px;">Zobrazit:</div>
<div class="a" style="left:173px;top:143px;width:246px;height:24px;border:1px solid #D0D0BF;border-top:none;border-radius:0 0 4px 4px;"></div>
<svg class="a" style="left:178px;top:151px" width="13" height="13"><defs><radialGradient id="rg178" cx="0.3" cy="0.3" r="0.8"><stop offset="0" stop-color="#fff"/><stop offset="1" stop-color="#D4D2C8"/></radialGradient></defs><circle cx="6.5" cy="6.5" r="5.8" fill="url(#rg178)" stroke="#1C5180" stroke-width="1.2"/><circle cx="6.5" cy="6.5" r="2.5" fill="#21A121"/></svg>
<div class="t" style="left:194px;top:151px;font-size:11px;">Faktury</div>
<svg class="a" style="left:236px;top:151px" width="13" height="13"><defs><radialGradient id="rg236" cx="0.3" cy="0.3" r="0.8"><stop offset="0" stop-color="#fff"/><stop offset="1" stop-color="#D4D2C8"/></radialGradient></defs><circle cx="6.5" cy="6.5" r="5.8" fill="url(#rg236)" stroke="#1C5180" stroke-width="1.2"/></svg>
<div class="t" style="left:252px;top:151px;font-size:11px;">Převodky</div>
<svg class="a" style="left:306px;top:151px" width="13" height="13"><defs><radialGradient id="rg306" cx="0.3" cy="0.3" r="0.8"><stop offset="0" stop-color="#fff"/><stop offset="1" stop-color="#D4D2C8"/></radialGradient></defs><circle cx="6.5" cy="6.5" r="5.8" fill="url(#rg306)" stroke="#1C5180" stroke-width="1.2"/></svg>
<div class="t" style="left:322px;top:151px;font-size:11px;letter-spacing:-0.1px;">Faktury i převodky</div>
<div class="t" style="left:426px;top:151px;font-size:11px;"><u>O</u>d data:</div>
<div class="a" style="left:471px;top:147px;width:82px;height:21px;background:#fff;border:1px solid #7F9DB9;"></div>
<div class="t" style="left:480px;top:151px;font-size:11.5px;">1. 1 .2004</div>
<div class="a" style="left:536px;top:149px;width:15px;height:17px;border:1px solid #fff;border-radius:2px;background:linear-gradient(135deg,#C5D4F7,#B2C6F2 60%,#A0B8EE);"><svg width="13" height="15" style="position:absolute;left:0;top:0"><path d="M3 6L6.5 9.5L10 6" stroke="#4D6185" stroke-width="2" fill="none"/></svg></div>
<div class="a" style="left:555px;top:148px;width:18px;height:19px;border:1px solid #003C74;border-radius:3px;background:linear-gradient(to bottom,#fff,#ECEBE6 70%,#D6D0C5);"><svg width="16" height="17" style="position:absolute;left:0;top:0"><path d="M4 6H12L8 10Z" fill="#000"/><rect x="4" y="11" width="8" height="1.5" fill="#000"/></svg></div>
<div class="t" style="left:581px;top:151px;font-size:11px;"><u>D</u>o data:</div>
<div class="a" style="left:626px;top:147px;width:82px;height:21px;background:#fff;border:1px solid #7F9DB9;"></div>
<div class="t" style="left:635px;top:151px;font-size:11.5px;">1. 9 .2014</div>
<div class="a" style="left:690px;top:149px;width:15px;height:17px;border:1px solid #fff;border-radius:2px;background:linear-gradient(135deg,#C5D4F7,#B2C6F2 60%,#A0B8EE);"><svg width="13" height="15" style="position:absolute;left:0;top:0"><path d="M3 6L6.5 9.5L10 6" stroke="#4D6185" stroke-width="2" fill="none"/></svg></div>
<div class="a" style="left:711px;top:148px;width:18px;height:19px;border:1px solid #003C74;border-radius:3px;background:linear-gradient(to bottom,#fff,#ECEBE6 70%,#D6D0C5);"><svg width="16" height="17" style="position:absolute;left:0;top:0"><path d="M4 6H12L8 10Z" fill="#000"/><rect x="4" y="11" width="8" height="1.5" fill="#000"/></svg></div>
<div class="a" style="left:128px;top:175px;width:13px;height:13px;border:1px solid #1C5180;background:linear-gradient(135deg,#DCDCD7,#fff);"></div>
<div class="t" style="left:144px;top:175px;font-size:11px;">Sklady:</div>
<div class="a" style="left:184px;top:171px;width:191px;height:21px;background:#fff;border:1px solid #7F9DB9;"></div>
<div class="a" style="left:377px;top:172px;width:18px;height:19px;border:1px solid #003C74;border-radius:3px;background:linear-gradient(to bottom,#fff,#ECEBE6 70%,#D6D0C5);"><div class="t" style="left:0;top:2px;width:16px;text-align:center;font-size:11px;letter-spacing:0.3px">...</div></div>
<div class="a" style="left:406px;top:175px;width:13px;height:13px;border:1px solid #1C5180;background:linear-gradient(135deg,#DCDCD7,#fff);"></div>
<div class="t" style="left:422px;top:175px;font-size:11px;letter-spacing:-0.15px;">Obch. jednotka:</div>
<div class="a" style="left:503px;top:171px;width:48px;height:21px;background:#fff;border:1px solid #7F9DB9;"></div>
<div class="t" style="left:507px;top:175px;font-size:11px;">AB00</div>
<div class="a" style="left:550px;top:171px;width:158px;height:21px;background:#fff;border:1px solid #7F9DB9;"></div>
<div class="t" style="left:554px;top:175px;font-size:11px;">AAC Distribution</div>
<div class="a" style="left:711px;top:172px;width:18px;height:19px;border:1px solid #003C74;border-radius:3px;background:linear-gradient(to bottom,#fff,#ECEBE6 70%,#D6D0C5);"><div class="t" style="left:0;top:2px;width:16px;text-align:center;font-size:11px;letter-spacing:0.3px">...</div></div>
<div class="a" style="left:125px;top:195px;width:74px;height:21px;border:1px solid #003C74;border-radius:3px;background:linear-gradient(to bottom,#FFFFFF 0%,#F4F4F0 40%,#ECEBE6 80%,#D6D0C5 100%);"><div class="t" style="left:0;top:4px;width:72px;text-align:center;font-size:11px;letter-spacing:-0.1px">Analyzovat</div></div>
<div class="a" style="left:208px;top:195px;width:138px;height:21px;border:1px solid #003C74;border-radius:3px;background:linear-gradient(to bottom,#FFFFFF 0%,#F4F4F0 40%,#ECEBE6 80%,#D6D0C5 100%);"><div class="t" style="left:0;top:4px;width:136px;text-align:center;font-size:11px;letter-spacing:-0.1px">Zobrazit doklad v agendě</div></div>
<div class="a" style="left:124px;top:219px;width:903px;height:334px;border:1px solid #7F9DB9;background:#fff;"></div>
<div class="a" style="left:126px;top:222px;width:883px;height:17px;background:#EBEADB;border-bottom:1px solid #ACA899;"></div>
<div class="a" style="left:126px;top:222px;width:12px;height:17px;background:#ECE9D8;border-right:1px solid #C7C5B2;"></div>
<div class="a" style="left:218px;top:224px;width:1px;height:13px;background:#C7C5B2;"></div>
<div class="a" style="left:219px;top:224px;width:1px;height:13px;background:#fff;"></div>
<div class="t" style="left:140px;top:224px;font-size:11px;letter-spacing:-0.15px;">Dat. vyst.</div>
<div class="a" style="left:302px;top:224px;width:1px;height:13px;background:#C7C5B2;"></div>
<div class="a" style="left:303px;top:224px;width:1px;height:13px;background:#fff;"></div>
<div class="t" style="left:221px;top:224px;font-size:11px;letter-spacing:-0.15px;">Cena (lok.)</div>
<div class="a" style="left:386px;top:224px;width:1px;height:13px;background:#C7C5B2;"></div>
<div class="a" style="left:387px;top:224px;width:1px;height:13px;background:#fff;"></div>
<div class="t" style="left:305px;top:224px;font-size:11px;letter-spacing:-0.15px;">Jedn. cena</div>
<div class="a" style="left:425px;top:224px;width:1px;height:13px;background:#C7C5B2;"></div>
<div class="a" style="left:426px;top:224px;width:1px;height:13px;background:#fff;"></div>
<div class="t" style="left:389px;top:224px;font-size:11px;letter-spacing:-0.15px;">Měna</div>
<div class="a" style="left:476px;top:224px;width:1px;height:13px;background:#C7C5B2;"></div>
<div class="a" style="left:477px;top:224px;width:1px;height:13px;background:#fff;"></div>
<div class="t" style="left:428px;top:224px;font-size:11px;letter-spacing:-0.15px;">Množství</div>
<div class="a" style="left:560px;top:224px;width:1px;height:13px;background:#C7C5B2;"></div>
<div class="a" style="left:561px;top:224px;width:1px;height:13px;background:#fff;"></div>
<div class="t" style="left:479px;top:224px;font-size:11px;letter-spacing:-0.15px;">Celková cena</div>
<div class="a" style="left:626px;top:224px;width:1px;height:13px;background:#C7C5B2;"></div>
<div class="a" style="left:627px;top:224px;width:1px;height:13px;background:#fff;"></div>
<div class="t" style="left:563px;top:224px;font-size:11px;letter-spacing:-0.15px;">Zisk</div>
<div class="a" style="left:678px;top:224px;width:1px;height:13px;background:#C7C5B2;"></div>
<div class="a" style="left:679px;top:224px;width:1px;height:13px;background:#fff;"></div>
<div class="t" style="left:629px;top:224px;font-size:11px;letter-spacing:-0.15px;">Marže [%]</div>
<div class="a" style="left:799px;top:224px;width:1px;height:13px;background:#C7C5B2;"></div>
<div class="a" style="left:800px;top:224px;width:1px;height:13px;background:#fff;"></div>
<div class="t" style="left:681px;top:224px;font-size:11px;letter-spacing:-0.15px;">Číslo dokladu</div>
<div class="a" style="left:972px;top:224px;width:1px;height:13px;background:#C7C5B2;"></div>
<div class="a" style="left:973px;top:224px;width:1px;height:13px;background:#fff;"></div>
<div class="t" style="left:802px;top:224px;font-size:11px;letter-spacing:-0.15px;">Název</div>
<div class="a" style="left:1009px;top:224px;width:1px;height:13px;background:#C7C5B2;"></div>
<div class="a" style="left:1010px;top:224px;width:1px;height:13px;background:#fff;"></div>
<div class="t" style="left:975px;top:224px;font-size:11px;letter-spacing:-0.15px;">Identifil</div>
<svg class="a" style="left:187px;top:224px" width="9" height="12"><path d="M0.5 1H8L4.3 8Z" fill="#C8C8C8" stroke="#A0A0A0" stroke-width="0.8"/><rect x="1" y="9.5" width="7" height="1.5" fill="#B0B0B0"/></svg>
<div class="a" style="left:126px;top:239px;width:883px;height:18px;background:#FFFDE6;"></div>
<div class="a" style="left:126px;top:239px;width:12px;height:18px;background:#ECE9D8;border-top:1px solid #fff;border-left:1px solid #fff;border-right:1px solid #ACA899;"></div>
<div class="a" style="left:126px;top:256px;width:883px;height:1px;background:#C8C8C8;"></div>
<div class="a" style="left:126px;top:256px;width:12px;height:1px;background:#ACA899;"></div>
<div class="t" style="left:140px;top:241px;font-size:11px;letter-spacing:-0.2px;">24.1.2005</div>
<div class="t" style="left:219px;top:241px;width:81px;text-align:right;font-size:11px;letter-spacing:-0.15px;">1,00</div>
<div class="t" style="left:303px;top:241px;width:81px;text-align:right;font-size:11px;letter-spacing:-0.15px;">1,00</div>
<div class="t" style="left:389px;top:241px;font-size:11px;letter-spacing:-0.2px;">CZK</div>
<div class="t" style="left:426px;top:241px;width:48px;text-align:right;font-size:11px;letter-spacing:-0.15px;">1,00</div>
<div class="t" style="left:477px;top:241px;width:81px;text-align:right;font-size:11px;letter-spacing:-0.15px;">1,00</div>
<div class="t" style="left:561px;top:241px;width:63px;text-align:right;font-size:11px;letter-spacing:-0.15px;">- 0,74</div>
<div class="t" style="left:627px;top:241px;width:49px;text-align:right;font-size:11px;letter-spacing:-0.15px;">-74,30</div>
<div class="t" style="left:681px;top:241px;font-size:11px;letter-spacing:-0.2px;">FO-4754001015</div>
<div class="t" style="left:802px;top:241px;font-size:11px;letter-spacing:-0.2px;">FALCON-ROKYCANY s.r.o.</div>
<div class="a" style="left:218px;top:239px;width:1px;height:18px;background:#C8C8C8;"></div>
<div class="a" style="left:302px;top:239px;width:1px;height:18px;background:#C8C8C8;"></div>
<div class="a" style="left:386px;top:239px;width:1px;height:18px;background:#C8C8C8;"></div>
<div class="a" style="left:425px;top:239px;width:1px;height:18px;background:#C8C8C8;"></div>
<div class="a" style="left:476px;top:239px;width:1px;height:18px;background:#C8C8C8;"></div>
<div class="a" style="left:560px;top:239px;width:1px;height:18px;background:#C8C8C8;"></div>
<div class="a" style="left:626px;top:239px;width:1px;height:18px;background:#C8C8C8;"></div>
<div class="a" style="left:678px;top:239px;width:1px;height:18px;background:#C8C8C8;"></div>
<div class="a" style="left:799px;top:239px;width:1px;height:18px;background:#C8C8C8;"></div>
<div class="a" style="left:972px;top:239px;width:1px;height:18px;background:#C8C8C8;"></div>
<div class="a" style="left:1009px;top:239px;width:1px;height:18px;background:#C8C8C8;"></div>
<div class="a" style="left:126px;top:257px;width:883px;height:18px;background:#fff;"></div>
<div class="a" style="left:126px;top:257px;width:12px;height:18px;background:#ECE9D8;border-top:1px solid #fff;border-left:1px solid #fff;border-right:1px solid #ACA899;"></div>
<div class="a" style="left:138px;top:257px;width:80px;height:17px;background:#F0C8A4;"></div>
<div class="a" style="left:126px;top:274px;width:883px;height:1px;background:#C8C8C8;"></div>
<div class="a" style="left:126px;top:274px;width:12px;height:1px;background:#ACA899;"></div>
<div class="t" style="left:140px;top:259px;font-size:11px;letter-spacing:-0.2px;">24.1.2005</div>
<div class="t" style="left:219px;top:259px;width:81px;text-align:right;font-size:11px;letter-spacing:-0.15px;">1,00</div>
<div class="t" style="left:303px;top:259px;width:81px;text-align:right;font-size:11px;letter-spacing:-0.15px;">1,00</div>
<div class="t" style="left:389px;top:259px;font-size:11px;letter-spacing:-0.2px;">CZK</div>
<div class="t" style="left:426px;top:259px;width:48px;text-align:right;font-size:11px;letter-spacing:-0.15px;">1,00</div>
<div class="t" style="left:477px;top:259px;width:81px;text-align:right;font-size:11px;letter-spacing:-0.15px;">1,00</div>
<div class="t" style="left:561px;top:259px;width:63px;text-align:right;font-size:11px;letter-spacing:-0.15px;">- 0,74</div>
<div class="t" style="left:627px;top:259px;width:49px;text-align:right;font-size:11px;letter-spacing:-0.15px;">-74,30</div>
<div class="t" style="left:681px;top:259px;font-size:11px;letter-spacing:-0.2px;">FO-5754000206</div>
<div class="t" style="left:802px;top:259px;font-size:11px;letter-spacing:-0.2px;">Karel Halamásek</div>
<div class="a" style="left:218px;top:257px;width:1px;height:18px;background:#C8C8C8;"></div>
<div class="a" style="left:302px;top:257px;width:1px;height:18px;background:#C8C8C8;"></div>
<div class="a" style="left:386px;top:257px;width:1px;height:18px;background:#C8C8C8;"></div>
<div class="a" style="left:425px;top:257px;width:1px;height:18px;background:#C8C8C8;"></div>
<div class="a" style="left:476px;top:257px;width:1px;height:18px;background:#C8C8C8;"></div>
<div class="a" style="left:560px;top:257px;width:1px;height:18px;background:#C8C8C8;"></div>
<div class="a" style="left:626px;top:257px;width:1px;height:18px;background:#C8C8C8;"></div>
<div class="a" style="left:678px;top:257px;width:1px;height:18px;background:#C8C8C8;"></div>
<div class="a" style="left:799px;top:257px;width:1px;height:18px;background:#C8C8C8;"></div>
<div class="a" style="left:972px;top:257px;width:1px;height:18px;background:#C8C8C8;"></div>
<div class="a" style="left:1009px;top:257px;width:1px;height:18px;background:#C8C8C8;"></div>
<div class="a" style="left:126px;top:275px;width:883px;height:18px;background:#fff;"></div>
<div class="a" style="left:126px;top:275px;width:12px;height:18px;background:#ECE9D8;border-top:1px solid #fff;border-left:1px solid #fff;border-right:1px solid #ACA899;"></div>
<div class="a" style="left:138px;top:275px;width:80px;height:17px;background:#F0C8A4;"></div>
<div class="a" style="left:126px;top:292px;width:883px;height:1px;background:#C8C8C8;"></div>
<div class="a" style="left:126px;top:292px;width:12px;height:1px;background:#ACA899;"></div>
<div class="t" style="left:140px;top:277px;font-size:11px;letter-spacing:-0.2px;">24.1.2005</div>
<div class="t" style="left:219px;top:277px;width:81px;text-align:right;font-size:11px;letter-spacing:-0.15px;">1,00</div>
<div class="t" style="left:303px;top:277px;width:81px;text-align:right;font-size:11px;letter-spacing:-0.15px;">1,00</div>
<div class="t" style="left:389px;top:277px;font-size:11px;letter-spacing:-0.2px;">CZK</div>
<div class="t" style="left:426px;top:277px;width:48px;text-align:right;font-size:11px;letter-spacing:-0.15px;">1,00</div>
<div class="t" style="left:477px;top:277px;width:81px;text-align:right;font-size:11px;letter-spacing:-0.15px;">1,00</div>
<div class="t" style="left:561px;top:277px;width:63px;text-align:right;font-size:11px;letter-spacing:-0.15px;">- 0,76</div>
<div class="t" style="left:627px;top:277px;width:49px;text-align:right;font-size:11px;letter-spacing:-0.15px;">-75,50</div>
<div class="t" style="left:681px;top:277px;font-size:11px;letter-spacing:-0.2px;">FO-6254001052</div>
<div class="t" style="left:802px;top:277px;font-size:11px;letter-spacing:-0.2px;">ProComputer, s.r.o.</div>
<div class="a" style="left:218px;top:275px;width:1px;height:18px;background:#C8C8C8;"></div>
<div class="a" style="left:302px;top:275px;width:1px;height:18px;background:#C8C8C8;"></div>
<div class="a" style="left:386px;top:275px;width:1px;height:18px;background:#C8C8C8;"></div>
<div class="a" style="left:425px;top:275px;width:1px;height:18px;background:#C8C8C8;"></div>
<div class="a" style="left:476px;top:275px;width:1px;height:18px;background:#C8C8C8;"></div>
<div class="a" style="left:560px;top:275px;width:1px;height:18px;background:#C8C8C8;"></div>
<div class="a" style="left:626px;top:275px;width:1px;height:18px;background:#C8C8C8;"></div>
<div class="a" style="left:678px;top:275px;width:1px;height:18px;background:#C8C8C8;"></div>
<div class="a" style="left:799px;top:275px;width:1px;height:18px;background:#C8C8C8;"></div>
<div class="a" style="left:972px;top:275px;width:1px;height:18px;background:#C8C8C8;"></div>
<div class="a" style="left:1009px;top:275px;width:1px;height:18px;background:#C8C8C8;"></div>
<div class="a" style="left:126px;top:293px;width:883px;height:18px;background:#fff;"></div>
<div class="a" style="left:126px;top:293px;width:12px;height:18px;background:#ECE9D8;border-top:1px solid #fff;border-left:1px solid #fff;border-right:1px solid #ACA899;"></div>
<div class="a" style="left:138px;top:293px;width:80px;height:17px;background:#F0C8A4;"></div>
<div class="a" style="left:126px;top:310px;width:883px;height:1px;background:#C8C8C8;"></div>
<div class="a" style="left:126px;top:310px;width:12px;height:1px;background:#ACA899;"></div>
<div class="t" style="left:140px;top:295px;font-size:11px;letter-spacing:-0.2px;">17.12.2004</div>
<div class="t" style="left:219px;top:295px;width:81px;text-align:right;font-size:11px;letter-spacing:-0.15px;">1,00</div>
<div class="t" style="left:303px;top:295px;width:81px;text-align:right;font-size:11px;letter-spacing:-0.15px;">1,00</div>
<div class="t" style="left:389px;top:295px;font-size:11px;letter-spacing:-0.2px;">CZK</div>
<div class="t" style="left:426px;top:295px;width:48px;text-align:right;font-size:11px;letter-spacing:-0.15px;">1,00</div>
<div class="t" style="left:477px;top:295px;width:81px;text-align:right;font-size:11px;letter-spacing:-0.15px;">1,00</div>
<div class="t" style="left:561px;top:295px;width:63px;text-align:right;font-size:11px;letter-spacing:-0.15px;">0,00</div>
<div class="t" style="left:627px;top:295px;width:49px;text-align:right;font-size:11px;letter-spacing:-0.15px;">0,00</div>
<div class="t" style="left:681px;top:295px;font-size:11px;letter-spacing:-0.2px;">FO-5344039586</div>
<div class="t" style="left:802px;top:295px;font-size:11px;letter-spacing:-0.2px;">Pavel Frank</div>
<div class="a" style="left:218px;top:293px;width:1px;height:18px;background:#C8C8C8;"></div>
<div class="a" style="left:302px;top:293px;width:1px;height:18px;background:#C8C8C8;"></div>
<div class="a" style="left:386px;top:293px;width:1px;height:18px;background:#C8C8C8;"></div>
<div class="a" style="left:425px;top:293px;width:1px;height:18px;background:#C8C8C8;"></div>
<div class="a" style="left:476px;top:293px;width:1px;height:18px;background:#C8C8C8;"></div>
<div class="a" style="left:560px;top:293px;width:1px;height:18px;background:#C8C8C8;"></div>
<div class="a" style="left:626px;top:293px;width:1px;height:18px;background:#C8C8C8;"></div>
<div class="a" style="left:678px;top:293px;width:1px;height:18px;background:#C8C8C8;"></div>
<div class="a" style="left:799px;top:293px;width:1px;height:18px;background:#C8C8C8;"></div>
<div class="a" style="left:972px;top:293px;width:1px;height:18px;background:#C8C8C8;"></div>
<div class="a" style="left:1009px;top:293px;width:1px;height:18px;background:#C8C8C8;"></div>
<div class="a" style="left:126px;top:311px;width:883px;height:18px;background:#fff;"></div>
<div class="a" style="left:126px;top:311px;width:12px;height:18px;background:#ECE9D8;border-top:1px solid #fff;border-left:1px solid #fff;border-right:1px solid #ACA899;"></div>
<div class="a" style="left:138px;top:311px;width:80px;height:17px;background:#F0C8A4;"></div>
<div class="a" style="left:126px;top:328px;width:883px;height:1px;background:#C8C8C8;"></div>
<div class="a" style="left:126px;top:328px;width:12px;height:1px;background:#ACA899;"></div>
<div class="t" style="left:140px;top:313px;font-size:11px;letter-spacing:-0.2px;">17.12.2004</div>
<div class="t" style="left:219px;top:313px;width:81px;text-align:right;font-size:11px;letter-spacing:-0.15px;">1,00</div>
<div class="t" style="left:303px;top:313px;width:81px;text-align:right;font-size:11px;letter-spacing:-0.15px;">1,00</div>
<div class="t" style="left:389px;top:313px;font-size:11px;letter-spacing:-0.2px;">CZK</div>
<div class="t" style="left:426px;top:313px;width:48px;text-align:right;font-size:11px;letter-spacing:-0.15px;">1,00</div>
<div class="t" style="left:477px;top:313px;width:81px;text-align:right;font-size:11px;letter-spacing:-0.15px;">1,00</div>
<div class="t" style="left:561px;top:313px;width:63px;text-align:right;font-size:11px;letter-spacing:-0.15px;">0,00</div>
<div class="t" style="left:627px;top:313px;width:49px;text-align:right;font-size:11px;letter-spacing:-0.15px;">0,00</div>
<div class="t" style="left:681px;top:313px;font-size:11px;letter-spacing:-0.2px;">FO-5344039587</div>
<div class="t" style="left:802px;top:313px;font-size:11px;letter-spacing:-0.2px;">Pavel Frank</div>
<div class="a" style="left:218px;top:311px;width:1px;height:18px;background:#C8C8C8;"></div>
<div class="a" style="left:302px;top:311px;width:1px;height:18px;background:#C8C8C8;"></div>
<div class="a" style="left:386px;top:311px;width:1px;height:18px;background:#C8C8C8;"></div>
<div class="a" style="left:425px;top:311px;width:1px;height:18px;background:#C8C8C8;"></div>
<div class="a" style="left:476px;top:311px;width:1px;height:18px;background:#C8C8C8;"></div>
<div class="a" style="left:560px;top:311px;width:1px;height:18px;background:#C8C8C8;"></div>
<div class="a" style="left:626px;top:311px;width:1px;height:18px;background:#C8C8C8;"></div>
<div class="a" style="left:678px;top:311px;width:1px;height:18px;background:#C8C8C8;"></div>
<div class="a" style="left:799px;top:311px;width:1px;height:18px;background:#C8C8C8;"></div>
<div class="a" style="left:972px;top:311px;width:1px;height:18px;background:#C8C8C8;"></div>
<div class="a" style="left:1009px;top:311px;width:1px;height:18px;background:#C8C8C8;"></div>
<div class="a" style="left:126px;top:329px;width:883px;height:18px;background:#fff;"></div>
<div class="a" style="left:126px;top:329px;width:12px;height:18px;background:#ECE9D8;border-top:1px solid #fff;border-left:1px solid #fff;border-right:1px solid #ACA899;"></div>
<div class="a" style="left:138px;top:329px;width:80px;height:17px;background:#F0C8A4;"></div>
<div class="a" style="left:126px;top:346px;width:883px;height:1px;background:#C8C8C8;"></div>
<div class="a" style="left:126px;top:346px;width:12px;height:1px;background:#ACA899;"></div>
<div class="t" style="left:140px;top:331px;font-size:11px;letter-spacing:-0.2px;">16.12.2004</div>
<div class="t" style="left:219px;top:331px;width:81px;text-align:right;font-size:11px;letter-spacing:-0.15px;">1,00</div>
<div class="t" style="left:303px;top:331px;width:81px;text-align:right;font-size:11px;letter-spacing:-0.15px;">1,00</div>
<div class="t" style="left:389px;top:331px;font-size:11px;letter-spacing:-0.2px;">CZK</div>
<div class="t" style="left:426px;top:331px;width:48px;text-align:right;font-size:11px;letter-spacing:-0.15px;">1,00</div>
<div class="t" style="left:477px;top:331px;width:81px;text-align:right;font-size:11px;letter-spacing:-0.15px;">1,00</div>
<div class="t" style="left:561px;top:331px;width:63px;text-align:right;font-size:11px;letter-spacing:-0.15px;">0,00</div>
<div class="t" style="left:627px;top:331px;width:49px;text-align:right;font-size:11px;letter-spacing:-0.15px;">0,00</div>
<div class="t" style="left:681px;top:331px;font-size:11px;letter-spacing:-0.2px;">FO-8044047129</div>
<div class="t" style="left:802px;top:331px;font-size:11px;letter-spacing:-0.2px;">Josef Zemek</div>
<div class="a" style="left:218px;top:329px;width:1px;height:18px;background:#C8C8C8;"></div>
<div class="a" style="left:302px;top:329px;width:1px;height:18px;background:#C8C8C8;"></div>
<div class="a" style="left:386px;top:329px;width:1px;height:18px;background:#C8C8C8;"></div>
<div class="a" style="left:425px;top:329px;width:1px;height:18px;background:#C8C8C8;"></div>
<div class="a" style="left:476px;top:329px;width:1px;height:18px;background:#C8C8C8;"></div>
<div class="a" style="left:560px;top:329px;width:1px;height:18px;background:#C8C8C8;"></div>
<div class="a" style="left:626px;top:329px;width:1px;height:18px;background:#C8C8C8;"></div>
<div class="a" style="left:678px;top:329px;width:1px;height:18px;background:#C8C8C8;"></div>
<div class="a" style="left:799px;top:329px;width:1px;height:18px;background:#C8C8C8;"></div>
<div class="a" style="left:972px;top:329px;width:1px;height:18px;background:#C8C8C8;"></div>
<div class="a" style="left:1009px;top:329px;width:1px;height:18px;background:#C8C8C8;"></div>
<div class="a" style="left:126px;top:347px;width:883px;height:18px;background:#fff;"></div>
<div class="a" style="left:126px;top:347px;width:12px;height:18px;background:#ECE9D8;border-top:1px solid #fff;border-left:1px solid #fff;border-right:1px solid #ACA899;"></div>
<div class="a" style="left:138px;top:347px;width:80px;height:17px;background:#F0C8A4;"></div>
<div class="a" style="left:126px;top:364px;width:883px;height:1px;background:#C8C8C8;"></div>
<div class="a" style="left:126px;top:364px;width:12px;height:1px;background:#ACA899;"></div>
<div class="t" style="left:140px;top:349px;font-size:11px;letter-spacing:-0.2px;">15.12.2004</div>
<div class="t" style="left:219px;top:349px;width:81px;text-align:right;font-size:11px;letter-spacing:-0.15px;">1,00</div>
<div class="t" style="left:303px;top:349px;width:81px;text-align:right;font-size:11px;letter-spacing:-0.15px;">1,00</div>
<div class="t" style="left:389px;top:349px;font-size:11px;letter-spacing:-0.2px;">CZK</div>
<div class="t" style="left:426px;top:349px;width:48px;text-align:right;font-size:11px;letter-spacing:-0.15px;">1,00</div>
<div class="t" style="left:477px;top:349px;width:81px;text-align:right;font-size:11px;letter-spacing:-0.15px;">1,00</div>
<div class="t" style="left:561px;top:349px;width:63px;text-align:right;font-size:11px;letter-spacing:-0.15px;">0,00</div>
<div class="t" style="left:627px;top:349px;width:49px;text-align:right;font-size:11px;letter-spacing:-0.15px;">0,00</div>
<div class="t" style="left:681px;top:349px;font-size:11px;letter-spacing:-0.2px;">FO-8044046943</div>
<div class="t" style="left:802px;top:349px;font-size:11px;letter-spacing:-0.2px;">ASYS IJD, spol. s.r.o.</div>
<div class="a" style="left:218px;top:347px;width:1px;height:18px;background:#C8C8C8;"></div>
<div class="a" style="left:302px;top:347px;width:1px;height:18px;background:#C8C8C8;"></div>
<div class="a" style="left:386px;top:347px;width:1px;height:18px;background:#C8C8C8;"></div>
<div class="a" style="left:425px;top:347px;width:1px;height:18px;background:#C8C8C8;"></div>
<div class="a" style="left:476px;top:347px;width:1px;height:18px;background:#C8C8C8;"></div>
<div class="a" style="left:560px;top:347px;width:1px;height:18px;background:#C8C8C8;"></div>
<div class="a" style="left:626px;top:347px;width:1px;height:18px;background:#C8C8C8;"></div>
<div class="a" style="left:678px;top:347px;width:1px;height:18px;background:#C8C8C8;"></div>
<div class="a" style="left:799px;top:347px;width:1px;height:18px;background:#C8C8C8;"></div>
<div class="a" style="left:972px;top:347px;width:1px;height:18px;background:#C8C8C8;"></div>
<div class="a" style="left:1009px;top:347px;width:1px;height:18px;background:#C8C8C8;"></div>
<div class="a" style="left:126px;top:365px;width:883px;height:18px;background:#fff;"></div>
<div class="a" style="left:126px;top:365px;width:12px;height:18px;background:#ECE9D8;border-top:1px solid #fff;border-left:1px solid #fff;border-right:1px solid #ACA899;"></div>
<div class="a" style="left:138px;top:365px;width:80px;height:17px;background:#F0C8A4;"></div>
<div class="a" style="left:126px;top:382px;width:883px;height:1px;background:#C8C8C8;"></div>
<div class="a" style="left:126px;top:382px;width:12px;height:1px;background:#ACA899;"></div>
<div class="t" style="left:140px;top:367px;font-size:11px;letter-spacing:-0.2px;">12.12.2004</div>
<div class="t" style="left:219px;top:367px;width:81px;text-align:right;font-size:11px;letter-spacing:-0.15px;">1,00</div>
<div class="t" style="left:303px;top:367px;width:81px;text-align:right;font-size:11px;letter-spacing:-0.15px;">1,00</div>
<div class="t" style="left:389px;top:367px;font-size:11px;letter-spacing:-0.2px;">CZK</div>
<div class="t" style="left:426px;top:367px;width:48px;text-align:right;font-size:11px;letter-spacing:-0.15px;">5,00</div>
<div class="t" style="left:477px;top:367px;width:81px;text-align:right;font-size:11px;letter-spacing:-0.15px;">5,00</div>
<div class="t" style="left:561px;top:367px;width:63px;text-align:right;font-size:11px;letter-spacing:-0.15px;">0,00</div>
<div class="t" style="left:627px;top:367px;width:49px;text-align:right;font-size:11px;letter-spacing:-0.15px;">0,00</div>
<div class="t" style="left:681px;top:367px;font-size:11px;letter-spacing:-0.2px;">FO-6244042078</div>
<div class="t" style="left:802px;top:367px;font-size:11px;letter-spacing:-0.2px;">ProComputer, s.r.o.</div>
<div class="a" style="left:218px;top:365px;width:1px;height:18px;background:#C8C8C8;"></div>
<div class="a" style="left:302px;top:365px;width:1px;height:18px;background:#C8C8C8;"></div>
<div class="a" style="left:386px;top:365px;width:1px;height:18px;background:#C8C8C8;"></div>
<div class="a" style="left:425px;top:365px;width:1px;height:18px;background:#C8C8C8;"></div>
<div class="a" style="left:476px;top:365px;width:1px;height:18px;background:#C8C8C8;"></div>
<div class="a" style="left:560px;top:365px;width:1px;height:18px;background:#C8C8C8;"></div>
<div class="a" style="left:626px;top:365px;width:1px;height:18px;background:#C8C8C8;"></div>
<div class="a" style="left:678px;top:365px;width:1px;height:18px;background:#C8C8C8;"></div>
<div class="a" style="left:799px;top:365px;width:1px;height:18px;background:#C8C8C8;"></div>
<div class="a" style="left:972px;top:365px;width:1px;height:18px;background:#C8C8C8;"></div>
<div class="a" style="left:1009px;top:365px;width:1px;height:18px;background:#C8C8C8;"></div>
<div class="a" style="left:126px;top:383px;width:883px;height:18px;background:#fff;"></div>
<div class="a" style="left:126px;top:383px;width:12px;height:18px;background:#ECE9D8;border-top:1px solid #fff;border-left:1px solid #fff;border-right:1px solid #ACA899;"></div>
<div class="a" style="left:138px;top:383px;width:80px;height:17px;background:#F0C8A4;"></div>
<div class="a" style="left:126px;top:400px;width:883px;height:1px;background:#C8C8C8;"></div>
<div class="a" style="left:126px;top:400px;width:12px;height:1px;background:#ACA899;"></div>
<div class="t" style="left:140px;top:385px;font-size:11px;letter-spacing:-0.2px;">9.12.2004</div>
<div class="t" style="left:219px;top:385px;width:81px;text-align:right;font-size:11px;letter-spacing:-0.15px;">1,00</div>
<div class="t" style="left:303px;top:385px;width:81px;text-align:right;font-size:11px;letter-spacing:-0.15px;">1,00</div>
<div class="t" style="left:389px;top:385px;font-size:11px;letter-spacing:-0.2px;">CZK</div>
<div class="t" style="left:426px;top:385px;width:48px;text-align:right;font-size:11px;letter-spacing:-0.15px;">1,00</div>
<div class="t" style="left:477px;top:385px;width:81px;text-align:right;font-size:11px;letter-spacing:-0.15px;">1,00</div>
<div class="t" style="left:561px;top:385px;width:63px;text-align:right;font-size:11px;letter-spacing:-0.15px;">0,00</div>
<div class="t" style="left:627px;top:385px;width:49px;text-align:right;font-size:11px;letter-spacing:-0.15px;">0,00</div>
<div class="t" style="left:681px;top:385px;font-size:11px;letter-spacing:-0.2px;">FO-4744035106</div>
<div class="t" style="left:802px;top:385px;font-size:11px;letter-spacing:-0.2px;">Zdeněk Jaroš</div>
<div class="a" style="left:218px;top:383px;width:1px;height:18px;background:#C8C8C8;"></div>
<div class="a" style="left:302px;top:383px;width:1px;height:18px;background:#C8C8C8;"></div>
<div class="a" style="left:386px;top:383px;width:1px;height:18px;background:#C8C8C8;"></div>
<div class="a" style="left:425px;top:383px;width:1px;height:18px;background:#C8C8C8;"></div>
<div class="a" style="left:476px;top:383px;width:1px;height:18px;background:#C8C8C8;"></div>
<div class="a" style="left:560px;top:383px;width:1px;height:18px;background:#C8C8C8;"></div>
<div class="a" style="left:626px;top:383px;width:1px;height:18px;background:#C8C8C8;"></div>
<div class="a" style="left:678px;top:383px;width:1px;height:18px;background:#C8C8C8;"></div>
<div class="a" style="left:799px;top:383px;width:1px;height:18px;background:#C8C8C8;"></div>
<div class="a" style="left:972px;top:383px;width:1px;height:18px;background:#C8C8C8;"></div>
<div class="a" style="left:1009px;top:383px;width:1px;height:18px;background:#C8C8C8;"></div>
<div class="a" style="left:126px;top:401px;width:883px;height:18px;background:#fff;"></div>
<div class="a" style="left:126px;top:401px;width:12px;height:18px;background:#ECE9D8;border-top:1px solid #fff;border-left:1px solid #fff;border-right:1px solid #ACA899;"></div>
<div class="a" style="left:138px;top:401px;width:80px;height:17px;background:#F0C8A4;"></div>
<div class="a" style="left:126px;top:418px;width:883px;height:1px;background:#C8C8C8;"></div>
<div class="a" style="left:126px;top:418px;width:12px;height:1px;background:#ACA899;"></div>
<div class="t" style="left:140px;top:403px;font-size:11px;letter-spacing:-0.2px;">7.12.2004</div>
<div class="t" style="left:219px;top:403px;width:81px;text-align:right;font-size:11px;letter-spacing:-0.15px;">0,00</div>
<div class="t" style="left:303px;top:403px;width:81px;text-align:right;font-size:11px;letter-spacing:-0.15px;">0,00</div>
<div class="t" style="left:389px;top:403px;font-size:11px;letter-spacing:-0.2px;">CZK</div>
<div class="t" style="left:426px;top:403px;width:48px;text-align:right;font-size:11px;letter-spacing:-0.15px;">1,00</div>
<div class="t" style="left:477px;top:403px;width:81px;text-align:right;font-size:11px;letter-spacing:-0.15px;">0,00</div>
<div class="t" style="left:561px;top:403px;width:63px;text-align:right;font-size:11px;letter-spacing:-0.15px;">- 1,00</div>
<div class="t" style="left:627px;top:403px;width:49px;text-align:right;font-size:11px;letter-spacing:-0.15px;">0,00</div>
<div class="t" style="left:681px;top:403px;font-size:11px;letter-spacing:-0.2px;">FO-4744035046</div>
<div class="t" style="left:802px;top:403px;font-size:11px;letter-spacing:-0.2px;">Petr Hák-Lamed+</div>
<div class="a" style="left:218px;top:401px;width:1px;height:18px;background:#C8C8C8;"></div>
<div class="a" style="left:302px;top:401px;width:1px;height:18px;background:#C8C8C8;"></div>
<div class="a" style="left:386px;top:401px;width:1px;height:18px;background:#C8C8C8;"></div>
<div class="a" style="left:425px;top:401px;width:1px;height:18px;background:#C8C8C8;"></div>
<div class="a" style="left:476px;top:401px;width:1px;height:18px;background:#C8C8C8;"></div>
<div class="a" style="left:560px;top:401px;width:1px;height:18px;background:#C8C8C8;"></div>
<div class="a" style="left:626px;top:401px;width:1px;height:18px;background:#C8C8C8;"></div>
<div class="a" style="left:678px;top:401px;width:1px;height:18px;background:#C8C8C8;"></div>
<div class="a" style="left:799px;top:401px;width:1px;height:18px;background:#C8C8C8;"></div>
<div class="a" style="left:972px;top:401px;width:1px;height:18px;background:#C8C8C8;"></div>
<div class="a" style="left:1009px;top:401px;width:1px;height:18px;background:#C8C8C8;"></div>
<div class="a" style="left:126px;top:419px;width:883px;height:18px;background:#fff;"></div>
<div class="a" style="left:126px;top:419px;width:12px;height:18px;background:#ECE9D8;border-top:1px solid #fff;border-left:1px solid #fff;border-right:1px solid #ACA899;"></div>
<div class="a" style="left:138px;top:419px;width:80px;height:17px;background:#F0C8A4;"></div>
<div class="a" style="left:126px;top:436px;width:883px;height:1px;background:#C8C8C8;"></div>
<div class="a" style="left:126px;top:436px;width:12px;height:1px;background:#ACA899;"></div>
<div class="t" style="left:140px;top:421px;font-size:11px;letter-spacing:-0.2px;">3.12.2004</div>
<div class="t" style="left:219px;top:421px;width:81px;text-align:right;font-size:11px;letter-spacing:-0.15px;">1,00</div>
<div class="t" style="left:303px;top:421px;width:81px;text-align:right;font-size:11px;letter-spacing:-0.15px;">1,00</div>
<div class="t" style="left:389px;top:421px;font-size:11px;letter-spacing:-0.2px;">CZK</div>
<div class="t" style="left:426px;top:421px;width:48px;text-align:right;font-size:11px;letter-spacing:-0.15px;">3,00</div>
<div class="t" style="left:477px;top:421px;width:81px;text-align:right;font-size:11px;letter-spacing:-0.15px;">3,00</div>
<div class="t" style="left:561px;top:421px;width:63px;text-align:right;font-size:11px;letter-spacing:-0.15px;">0,00</div>
<div class="t" style="left:627px;top:421px;width:49px;text-align:right;font-size:11px;letter-spacing:-0.15px;">0,00</div>
<div class="t" style="left:681px;top:421px;font-size:11px;letter-spacing:-0.2px;">FO-8044045029</div>
<div class="t" style="left:802px;top:421px;font-size:11px;letter-spacing:-0.2px;">ASYS IJD, spol. s.r.o.</div>
<div class="a" style="left:218px;top:419px;width:1px;height:18px;background:#C8C8C8;"></div>
<div class="a" style="left:302px;top:419px;width:1px;height:18px;background:#C8C8C8;"></div>
<div class="a" style="left:386px;top:419px;width:1px;height:18px;background:#C8C8C8;"></div>
<div class="a" style="left:425px;top:419px;width:1px;height:18px;background:#C8C8C8;"></div>
<div class="a" style="left:476px;top:419px;width:1px;height:18px;background:#C8C8C8;"></div>
<div class="a" style="left:560px;top:419px;width:1px;height:18px;background:#C8C8C8;"></div>
<div class="a" style="left:626px;top:419px;width:1px;height:18px;background:#C8C8C8;"></div>
<div class="a" style="left:678px;top:419px;width:1px;height:18px;background:#C8C8C8;"></div>
<div class="a" style="left:799px;top:419px;width:1px;height:18px;background:#C8C8C8;"></div>
<div class="a" style="left:972px;top:419px;width:1px;height:18px;background:#C8C8C8;"></div>
<div class="a" style="left:1009px;top:419px;width:1px;height:18px;background:#C8C8C8;"></div>
<div class="a" style="left:126px;top:437px;width:883px;height:18px;background:#fff;"></div>
<div class="a" style="left:126px;top:437px;width:12px;height:18px;background:#ECE9D8;border-top:1px solid #fff;border-left:1px solid #fff;border-right:1px solid #ACA899;"></div>
<div class="a" style="left:138px;top:437px;width:80px;height:17px;background:#F0C8A4;"></div>
<div class="a" style="left:126px;top:454px;width:883px;height:1px;background:#C8C8C8;"></div>
<div class="a" style="left:126px;top:454px;width:12px;height:1px;background:#ACA899;"></div>
<div class="t" style="left:140px;top:439px;font-size:11px;letter-spacing:-0.2px;">12.11.2004</div>
<div class="t" style="left:219px;top:439px;width:81px;text-align:right;font-size:11px;letter-spacing:-0.15px;">2,00</div>
<div class="t" style="left:303px;top:439px;width:81px;text-align:right;font-size:11px;letter-spacing:-0.15px;">2,00</div>
<div class="t" style="left:389px;top:439px;font-size:11px;letter-spacing:-0.2px;">CZK</div>
<div class="t" style="left:426px;top:439px;width:48px;text-align:right;font-size:11px;letter-spacing:-0.15px;">1,00</div>
<div class="t" style="left:477px;top:439px;width:81px;text-align:right;font-size:11px;letter-spacing:-0.15px;">2,00</div>
<div class="t" style="left:561px;top:439px;width:63px;text-align:right;font-size:11px;letter-spacing:-0.15px;">1,00</div>
<div class="t" style="left:627px;top:439px;width:49px;text-align:right;font-size:11px;letter-spacing:-0.15px;">50,00</div>
<div class="t" style="left:681px;top:439px;font-size:11px;letter-spacing:-0.2px;">FO-8044042871</div>
<div class="t" style="left:802px;top:439px;font-size:11px;letter-spacing:-0.2px;">KLIMEŠ Lubomír</div>
<div class="a" style="left:218px;top:437px;width:1px;height:18px;background:#C8C8C8;"></div>
<div class="a" style="left:302px;top:437px;width:1px;height:18px;background:#C8C8C8;"></div>
<div class="a" style="left:386px;top:437px;width:1px;height:18px;background:#C8C8C8;"></div>
<div class="a" style="left:425px;top:437px;width:1px;height:18px;background:#C8C8C8;"></div>
<div class="a" style="left:476px;top:437px;width:1px;height:18px;background:#C8C8C8;"></div>
<div class="a" style="left:560px;top:437px;width:1px;height:18px;background:#C8C8C8;"></div>
<div class="a" style="left:626px;top:437px;width:1px;height:18px;background:#C8C8C8;"></div>
<div class="a" style="left:678px;top:437px;width:1px;height:18px;background:#C8C8C8;"></div>
<div class="a" style="left:799px;top:437px;width:1px;height:18px;background:#C8C8C8;"></div>
<div class="a" style="left:972px;top:437px;width:1px;height:18px;background:#C8C8C8;"></div>
<div class="a" style="left:1009px;top:437px;width:1px;height:18px;background:#C8C8C8;"></div>
<div class="a" style="left:126px;top:455px;width:883px;height:18px;background:#fff;"></div>
<div class="a" style="left:126px;top:455px;width:12px;height:18px;background:#ECE9D8;border-top:1px solid #fff;border-left:1px solid #fff;border-right:1px solid #ACA899;"></div>
<div class="a" style="left:138px;top:455px;width:80px;height:17px;background:#F0C8A4;"></div>
<div class="a" style="left:126px;top:472px;width:883px;height:1px;background:#C8C8C8;"></div>
<div class="a" style="left:126px;top:472px;width:12px;height:1px;background:#ACA899;"></div>
<div class="t" style="left:140px;top:457px;font-size:11px;letter-spacing:-0.2px;">11.11.2004</div>
<div class="t" style="left:219px;top:457px;width:81px;text-align:right;font-size:11px;letter-spacing:-0.15px;">1,00</div>
<div class="t" style="left:303px;top:457px;width:81px;text-align:right;font-size:11px;letter-spacing:-0.15px;">1,00</div>
<div class="t" style="left:389px;top:457px;font-size:11px;letter-spacing:-0.2px;">CZK</div>
<div class="t" style="left:426px;top:457px;width:48px;text-align:right;font-size:11px;letter-spacing:-0.15px;">1,00</div>
<div class="t" style="left:477px;top:457px;width:81px;text-align:right;font-size:11px;letter-spacing:-0.15px;">1,00</div>
<div class="t" style="left:561px;top:457px;width:63px;text-align:right;font-size:11px;letter-spacing:-0.15px;">0,00</div>
<div class="t" style="left:627px;top:457px;width:49px;text-align:right;font-size:11px;letter-spacing:-0.15px;">0,00</div>
<div class="t" style="left:681px;top:457px;font-size:11px;letter-spacing:-0.2px;">FO-4744034628</div>
<div class="t" style="left:802px;top:457px;font-size:11px;letter-spacing:-0.2px;">FALCON-ROKYCANY s.r.o.</div>
<div class="a" style="left:218px;top:455px;width:1px;height:18px;background:#C8C8C8;"></div>
<div class="a" style="left:302px;top:455px;width:1px;height:18px;background:#C8C8C8;"></div>
<div class="a" style="left:386px;top:455px;width:1px;height:18px;background:#C8C8C8;"></div>
<div class="a" style="left:425px;top:455px;width:1px;height:18px;background:#C8C8C8;"></div>
<div class="a" style="left:476px;top:455px;width:1px;height:18px;background:#C8C8C8;"></div>
<div class="a" style="left:560px;top:455px;width:1px;height:18px;background:#C8C8C8;"></div>
<div class="a" style="left:626px;top:455px;width:1px;height:18px;background:#C8C8C8;"></div>
<div class="a" style="left:678px;top:455px;width:1px;height:18px;background:#C8C8C8;"></div>
<div class="a" style="left:799px;top:455px;width:1px;height:18px;background:#C8C8C8;"></div>
<div class="a" style="left:972px;top:455px;width:1px;height:18px;background:#C8C8C8;"></div>
<div class="a" style="left:1009px;top:455px;width:1px;height:18px;background:#C8C8C8;"></div>
<div class="a" style="left:126px;top:473px;width:883px;height:18px;background:#fff;"></div>
<div class="a" style="left:126px;top:473px;width:12px;height:18px;background:#ECE9D8;border-top:1px solid #fff;border-left:1px solid #fff;border-right:1px solid #ACA899;"></div>
<div class="a" style="left:138px;top:473px;width:80px;height:17px;background:#F0C8A4;"></div>
<div class="a" style="left:126px;top:490px;width:883px;height:1px;background:#C8C8C8;"></div>
<div class="a" style="left:126px;top:490px;width:12px;height:1px;background:#ACA899;"></div>
<div class="t" style="left:140px;top:475px;font-size:11px;letter-spacing:-0.2px;">9.11.2004</div>
<div class="t" style="left:219px;top:475px;width:81px;text-align:right;font-size:11px;letter-spacing:-0.15px;">1,00</div>
<div class="t" style="left:303px;top:475px;width:81px;text-align:right;font-size:11px;letter-spacing:-0.15px;">1,00</div>
<div class="t" style="left:389px;top:475px;font-size:11px;letter-spacing:-0.2px;">CZK</div>
<div class="t" style="left:426px;top:475px;width:48px;text-align:right;font-size:11px;letter-spacing:-0.15px;">1,00</div>
<div class="t" style="left:477px;top:475px;width:81px;text-align:right;font-size:11px;letter-spacing:-0.15px;">1,00</div>
<div class="t" style="left:561px;top:475px;width:63px;text-align:right;font-size:11px;letter-spacing:-0.15px;">0,00</div>
<div class="t" style="left:627px;top:475px;width:49px;text-align:right;font-size:11px;letter-spacing:-0.15px;">0,00</div>
<div class="t" style="left:681px;top:475px;font-size:11px;letter-spacing:-0.2px;">FO-1144056914</div>
<div class="t" style="left:802px;top:475px;font-size:11px;letter-spacing:-0.2px;">INTERSERVIS ČERTEZ</div>
<div class="a" style="left:218px;top:473px;width:1px;height:18px;background:#C8C8C8;"></div>
<div class="a" style="left:302px;top:473px;width:1px;height:18px;background:#C8C8C8;"></div>
<div class="a" style="left:386px;top:473px;width:1px;height:18px;background:#C8C8C8;"></div>
<div class="a" style="left:425px;top:473px;width:1px;height:18px;background:#C8C8C8;"></div>
<div class="a" style="left:476px;top:473px;width:1px;height:18px;background:#C8C8C8;"></div>
<div class="a" style="left:560px;top:473px;width:1px;height:18px;background:#C8C8C8;"></div>
<div class="a" style="left:626px;top:473px;width:1px;height:18px;background:#C8C8C8;"></div>
<div class="a" style="left:678px;top:473px;width:1px;height:18px;background:#C8C8C8;"></div>
<div class="a" style="left:799px;top:473px;width:1px;height:18px;background:#C8C8C8;"></div>
<div class="a" style="left:972px;top:473px;width:1px;height:18px;background:#C8C8C8;"></div>
<div class="a" style="left:1009px;top:473px;width:1px;height:18px;background:#C8C8C8;"></div>
<div class="a" style="left:126px;top:491px;width:883px;height:18px;background:#fff;"></div>
<div class="a" style="left:126px;top:491px;width:12px;height:18px;background:#ECE9D8;border-top:1px solid #fff;border-left:1px solid #fff;border-right:1px solid #ACA899;"></div>
<div class="a" style="left:138px;top:491px;width:80px;height:17px;background:#F0C8A4;"></div>
<div class="a" style="left:126px;top:508px;width:883px;height:1px;background:#C8C8C8;"></div>
<div class="a" style="left:126px;top:508px;width:12px;height:1px;background:#ACA899;"></div>
<div class="t" style="left:140px;top:493px;font-size:11px;letter-spacing:-0.2px;">4.11.2004</div>
<div class="t" style="left:219px;top:493px;width:81px;text-align:right;font-size:11px;letter-spacing:-0.15px;">1,00</div>
<div class="t" style="left:303px;top:493px;width:81px;text-align:right;font-size:11px;letter-spacing:-0.15px;">1,00</div>
<div class="t" style="left:389px;top:493px;font-size:11px;letter-spacing:-0.2px;">CZK</div>
<div class="t" style="left:426px;top:493px;width:48px;text-align:right;font-size:11px;letter-spacing:-0.15px;">1,00</div>
<div class="t" style="left:477px;top:493px;width:81px;text-align:right;font-size:11px;letter-spacing:-0.15px;">1,00</div>
<div class="t" style="left:561px;top:493px;width:63px;text-align:right;font-size:11px;letter-spacing:-0.15px;">0,00</div>
<div class="t" style="left:627px;top:493px;width:49px;text-align:right;font-size:11px;letter-spacing:-0.15px;">0,00</div>
<div class="t" style="left:681px;top:493px;font-size:11px;letter-spacing:-0.2px;">FO-4744034507</div>
<div class="t" style="left:802px;top:493px;font-size:11px;letter-spacing:-0.2px;">CORADO system, s.r.o.</div>
<div class="a" style="left:218px;top:491px;width:1px;height:18px;background:#C8C8C8;"></div>
<div class="a" style="left:302px;top:491px;width:1px;height:18px;background:#C8C8C8;"></div>
<div class="a" style="left:386px;top:491px;width:1px;height:18px;background:#C8C8C8;"></div>
<div class="a" style="left:425px;top:491px;width:1px;height:18px;background:#C8C8C8;"></div>
<div class="a" style="left:476px;top:491px;width:1px;height:18px;background:#C8C8C8;"></div>
<div class="a" style="left:560px;top:491px;width:1px;height:18px;background:#C8C8C8;"></div>
<div class="a" style="left:626px;top:491px;width:1px;height:18px;background:#C8C8C8;"></div>
<div class="a" style="left:678px;top:491px;width:1px;height:18px;background:#C8C8C8;"></div>
<div class="a" style="left:799px;top:491px;width:1px;height:18px;background:#C8C8C8;"></div>
<div class="a" style="left:972px;top:491px;width:1px;height:18px;background:#C8C8C8;"></div>
<div class="a" style="left:1009px;top:491px;width:1px;height:18px;background:#C8C8C8;"></div>
<div class="a" style="left:126px;top:509px;width:883px;height:18px;background:#fff;"></div>
<div class="a" style="left:126px;top:509px;width:12px;height:18px;background:#ECE9D8;border-top:1px solid #fff;border-left:1px solid #fff;border-right:1px solid #ACA899;"></div>
<div class="a" style="left:138px;top:509px;width:80px;height:17px;background:#F0C8A4;"></div>
<div class="a" style="left:126px;top:526px;width:883px;height:1px;background:#C8C8C8;"></div>
<div class="a" style="left:126px;top:526px;width:12px;height:1px;background:#ACA899;"></div>
<div class="t" style="left:140px;top:511px;font-size:11px;letter-spacing:-0.2px;">27.10.2004</div>
<div class="t" style="left:219px;top:511px;width:81px;text-align:right;font-size:11px;letter-spacing:-0.15px;">1,00</div>
<div class="t" style="left:303px;top:511px;width:81px;text-align:right;font-size:11px;letter-spacing:-0.15px;">1,00</div>
<div class="t" style="left:389px;top:511px;font-size:11px;letter-spacing:-0.2px;">CZK</div>
<div class="t" style="left:426px;top:511px;width:48px;text-align:right;font-size:11px;letter-spacing:-0.15px;">1,00</div>
<div class="t" style="left:477px;top:511px;width:81px;text-align:right;font-size:11px;letter-spacing:-0.15px;">1,00</div>
<div class="t" style="left:561px;top:511px;width:63px;text-align:right;font-size:11px;letter-spacing:-0.15px;">0,00</div>
<div class="t" style="left:627px;top:511px;width:49px;text-align:right;font-size:11px;letter-spacing:-0.15px;">0,00</div>
<div class="t" style="left:681px;top:511px;font-size:11px;letter-spacing:-0.2px;">FO-1144056110</div>
<div class="t" style="left:802px;top:511px;font-size:11px;letter-spacing:-0.2px;">ROHÉ-ČR s.r.o.</div>
<div class="a" style="left:218px;top:509px;width:1px;height:18px;background:#C8C8C8;"></div>
<div class="a" style="left:302px;top:509px;width:1px;height:18px;background:#C8C8C8;"></div>
<div class="a" style="left:386px;top:509px;width:1px;height:18px;background:#C8C8C8;"></div>
<div class="a" style="left:425px;top:509px;width:1px;height:18px;background:#C8C8C8;"></div>
<div class="a" style="left:476px;top:509px;width:1px;height:18px;background:#C8C8C8;"></div>
<div class="a" style="left:560px;top:509px;width:1px;height:18px;background:#C8C8C8;"></div>
<div class="a" style="left:626px;top:509px;width:1px;height:18px;background:#C8C8C8;"></div>
<div class="a" style="left:678px;top:509px;width:1px;height:18px;background:#C8C8C8;"></div>
<div class="a" style="left:799px;top:509px;width:1px;height:18px;background:#C8C8C8;"></div>
<div class="a" style="left:972px;top:509px;width:1px;height:18px;background:#C8C8C8;"></div>
<div class="a" style="left:1009px;top:509px;width:1px;height:18px;background:#C8C8C8;"></div>
<svg class="a" style="left:128px;top:243px" width="8" height="11"><path d="M1 0.5V10.5L7 5.5Z" fill="#000"/></svg>
<div class="a" style="left:561px;top:239px;width:64px;height:17px;border:1px dotted #000;"></div>
<div class="a" style="left:1009px;top:222px;width:17px;height:330px;background:#FDFDFB;"></div>
<div class="a" style="left:1009px;top:222px;width:16px;height:16px;border:1px solid #fff;border-radius:2px;background:linear-gradient(135deg,#D6E2FC,#B9CDF7 60%,#A9C0F2);"><svg width="16" height="16" style="position:absolute;left:-1px;top:-1px"><path d="M4 10L8 6L12 10" stroke="#4D6185" stroke-width="2.4" fill="none"/></svg></div>
<div class="a" style="left:1010px;top:239px;width:14px;height:97px;border:1px solid #fff;border-radius:2px;background:linear-gradient(to right,#C8D8FA,#B9CDF7 50%,#AFC6F6);"><svg width="12" height="95" style="position:absolute;left:0;top:0" shape-rendering="crispEdges"><path d="M3 43.5H9M3 45.5H9M3 47.5H9M3 49.5H9" stroke="#EEF4FE" stroke-width="1"/><path d="M4 44.5H10M4 46.5H10M4 48.5H10M4 50.5H10" stroke="#8CB0F8" stroke-width="1"/></svg></div>
<div class="a" style="left:1009px;top:518px;width:16px;height:16px;border:1px solid #fff;border-radius:2px;background:linear-gradient(135deg,#D6E2FC,#B9CDF7 60%,#A9C0F2);"><svg width="16" height="16" style="position:absolute;left:-1px;top:-1px"><path d="M4 6L8 10L12 6" stroke="#4D6185" stroke-width="2.4" fill="none"/></svg></div>
<div class="a" style="left:126px;top:535px;width:883px;height:17px;background:#FDFDFB;"></div>
<div class="a" style="left:126px;top:535px;width:16px;height:16px;border:1px solid #fff;border-radius:2px;background:linear-gradient(135deg,#D6E2FC,#B9CDF7 60%,#A9C0F2);"><svg width="16" height="16" style="position:absolute;left:-1px;top:-1px"><path d="M10 4L6 8L10 12" stroke="#4D6185" stroke-width="2.4" fill="none"/></svg></div>
<div class="a" style="left:143px;top:535px;width:16px;height:16px;border:1px solid #fff;border-radius:2px;background:linear-gradient(to bottom,#C8D8FA,#B9CDF7 50%,#AFC6F6);"><svg width="14" height="14" style="position:absolute;left:0;top:0" shape-rendering="crispEdges"><path d="M3.5 4V10M5.5 4V10M7.5 4V10M9.5 4V10" stroke="#EEF4FE"/><path d="M4.5 5V11M6.5 5V11M8.5 5V11M10.5 5V11" stroke="#8CB0F8"/></svg></div>
<div class="a" style="left:992px;top:535px;width:16px;height:16px;border:1px solid #fff;border-radius:2px;background:linear-gradient(135deg,#D6E2FC,#B9CDF7 60%,#A9C0F2);"><svg width="16" height="16" style="position:absolute;left:-1px;top:-1px"><path d="M6 4L10 8L6 12" stroke="#4D6185" stroke-width="2.4" fill="none"/></svg></div>
<div class="a" style="left:1009px;top:535px;width:17px;height:17px;background:#ECE9D8;"></div>
<div class="a" style="left:124px;top:558px;width:903px;height:217px;background:#ECE9D8;"></div>
<svg class="a" style="left:0;top:0" width="1035" height="802"><polygon points="170.0,600.2 203.9,566.9 203.9,712.5 170.0,745.8" fill="#FFFF80"/><polygon points="170.0,745.8 203.9,712.5 901.9,712.5 868.0,745.8" fill="#FFFFFF"/><line x1="205.5" y1="703.5" x2="901.5" y2="703.5" stroke="#808080" stroke-width="1" stroke-dasharray="3 3" shape-rendering="crispEdges"/><line x1="205.5" y1="686.5" x2="901.5" y2="686.5" stroke="#808080" stroke-width="1" stroke-dasharray="3 3" shape-rendering="crispEdges"/><line x1="205.5" y1="669.5" x2="901.5" y2="669.5" stroke="#808080" stroke-width="1" stroke-dasharray="3 3" shape-rendering="crispEdges"/><line x1="205.5" y1="652.5" x2="901.5" y2="652.5" stroke="#808080" stroke-width="1" stroke-dasharray="3 3" shape-rendering="crispEdges"/><line x1="205.5" y1="635.5" x2="901.5" y2="635.5" stroke="#808080" stroke-width="1" stroke-dasharray="3 3" shape-rendering="crispEdges"/><line x1="205.5" y1="618.5" x2="901.5" y2="618.5" stroke="#808080" stroke-width="1" stroke-dasharray="3 3" shape-rendering="crispEdges"/><line x1="205.5" y1="601.5" x2="901.5" y2="601.5" stroke="#808080" stroke-width="1" stroke-dasharray="3 3" shape-rendering="crispEdges"/><line x1="205.5" y1="584.5" x2="901.5" y2="584.5" stroke="#808080" stroke-width="1" stroke-dasharray="3 3" shape-rendering="crispEdges"/><line x1="227.5" y1="567.5" x2="227.5" y2="712.5" stroke="#808080" stroke-width="1" stroke-dasharray="3 3" shape-rendering="crispEdges"/><line x1="252.5" y1="567.5" x2="252.5" y2="712.5" stroke="#808080" stroke-width="1" stroke-dasharray="3 3" shape-rendering="crispEdges"/><line x1="276.5" y1="567.5" x2="276.5" y2="712.5" stroke="#808080" stroke-width="1" stroke-dasharray="3 3" shape-rendering="crispEdges"/><line x1="300.5" y1="567.5" x2="300.5" y2="712.5" stroke="#808080" stroke-width="1" stroke-dasharray="3 3" shape-rendering="crispEdges"/><line x1="324.5" y1="567.5" x2="324.5" y2="712.5" stroke="#808080" stroke-width="1" stroke-dasharray="3 3" shape-rendering="crispEdges"/><line x1="348.5" y1="567.5" x2="348.5" y2="712.5" stroke="#808080" stroke-width="1" stroke-dasharray="3 3" shape-rendering="crispEdges"/><line x1="372.5" y1="567.5" x2="372.5" y2="712.5" stroke="#808080" stroke-width="1" stroke-dasharray="3 3" shape-rendering="crispEdges"/><line x1="396.5" y1="567.5" x2="396.5" y2="712.5" stroke="#808080" stroke-width="1" stroke-dasharray="3 3" shape-rendering="crispEdges"/><line x1="420.5" y1="567.5" x2="420.5" y2="712.5" stroke="#808080" stroke-width="1" stroke-dasharray="3 3" shape-rendering="crispEdges"/><line x1="444.5" y1="567.5" x2="444.5" y2="712.5" stroke="#808080" stroke-width="1" stroke-dasharray="3 3" shape-rendering="crispEdges"/><line x1="468.5" y1="567.5" x2="468.5" y2="712.5" stroke="#808080" stroke-width="1" stroke-dasharray="3 3" shape-rendering="crispEdges"/><line x1="492.5" y1="567.5" x2="492.5" y2="712.5" stroke="#808080" stroke-width="1" stroke-dasharray="3 3" shape-rendering="crispEdges"/><line x1="516.5" y1="567.5" x2="516.5" y2="712.5" stroke="#808080" stroke-width="1" stroke-dasharray="3 3" shape-rendering="crispEdges"/><line x1="540.5" y1="567.5" x2="540.5" y2="712.5" stroke="#808080" stroke-width="1" stroke-dasharray="3 3" shape-rendering="crispEdges"/><line x1="564.5" y1="567.5" x2="564.5" y2="712.5" stroke="#808080" stroke-width="1" stroke-dasharray="3 3" shape-rendering="crispEdges"/><line x1="589.5" y1="567.5" x2="589.5" y2="712.5" stroke="#808080" stroke-width="1" stroke-dasharray="3 3" shape-rendering="crispEdges"/><line x1="613.5" y1="567.5" x2="613.5" y2="712.5" stroke="#808080" stroke-width="1" stroke-dasharray="3 3" shape-rendering="crispEdges"/><line x1="637.5" y1="567.5" x2="637.5" y2="712.5" stroke="#808080" stroke-width="1" stroke-dasharray="3 3" shape-rendering="crispEdges"/><line x1="661.5" y1="567.5" x2="661.5" y2="712.5" stroke="#808080" stroke-width="1" stroke-dasharray="3 3" shape-rendering="crispEdges"/><line x1="685.5" y1="567.5" x2="685.5" y2="712.5" stroke="#808080" stroke-width="1" stroke-dasharray="3 3" shape-rendering="crispEdges"/><line x1="709.5" y1="567.5" x2="709.5" y2="712.5" stroke="#808080" stroke-width="1" stroke-dasharray="3 3" shape-rendering="crispEdges"/><line x1="733.5" y1="567.5" x2="733.5" y2="712.5" stroke="#808080" stroke-width="1" stroke-dasharray="3 3" shape-rendering="crispEdges"/><line x1="757.5" y1="567.5" x2="757.5" y2="712.5" stroke="#808080" stroke-width="1" stroke-dasharray="3 3" shape-rendering="crispEdges"/><line x1="781.5" y1="567.5" x2="781.5" y2="712.5" stroke="#808080" stroke-width="1" stroke-dasharray="3 3" shape-rendering="crispEdges"/><line x1="805.5" y1="567.5" x2="805.5" y2="712.5" stroke="#808080" stroke-width="1" stroke-dasharray="3 3" shape-rendering="crispEdges"/><line x1="829.5" y1="567.5" x2="829.5" y2="712.5" stroke="#808080" stroke-width="1" stroke-dasharray="3 3" shape-rendering="crispEdges"/><line x1="853.5" y1="567.5" x2="853.5" y2="712.5" stroke="#808080" stroke-width="1" stroke-dasharray="3 3" shape-rendering="crispEdges"/><line x1="877.5" y1="567.5" x2="877.5" y2="712.5" stroke="#808080" stroke-width="1" stroke-dasharray="3 3" shape-rendering="crispEdges"/><line x1="205.5" y1="567.5" x2="901.5" y2="567.5" stroke="#808080" stroke-width="1" stroke-dasharray="3 3" shape-rendering="crispEdges"/><line x1="170.0" y1="737.2" x2="203.9" y2="703.9" stroke="#808080" stroke-width="1" stroke-dasharray="4 3"/><line x1="170.0" y1="720.1" x2="203.9" y2="686.8" stroke="#808080" stroke-width="1" stroke-dasharray="4 3"/><line x1="170.0" y1="703.0" x2="203.9" y2="669.7" stroke="#808080" stroke-width="1" stroke-dasharray="4 3"/><line x1="170.0" y1="685.8" x2="203.9" y2="652.5" stroke="#808080" stroke-width="1" stroke-dasharray="4 3"/><line x1="170.0" y1="668.7" x2="203.9" y2="635.4" stroke="#808080" stroke-width="1" stroke-dasharray="4 3"/><line x1="170.0" y1="651.6" x2="203.9" y2="618.3" stroke="#808080" stroke-width="1" stroke-dasharray="4 3"/><line x1="170.0" y1="634.5" x2="203.9" y2="601.2" stroke="#808080" stroke-width="1" stroke-dasharray="4 3"/><line x1="170.0" y1="617.3" x2="203.9" y2="584.0" stroke="#808080" stroke-width="1" stroke-dasharray="4 3"/><line x1="194.1" y1="745.8" x2="228.0" y2="712.5" stroke="#808080" stroke-width="1" stroke-dasharray="4 3"/><line x1="218.1" y1="745.8" x2="252.0" y2="712.5" stroke="#808080" stroke-width="1" stroke-dasharray="4 3"/><line x1="242.2" y1="745.8" x2="276.1" y2="712.5" stroke="#808080" stroke-width="1" stroke-dasharray="4 3"/><line x1="266.3" y1="745.8" x2="300.2" y2="712.5" stroke="#808080" stroke-width="1" stroke-dasharray="4 3"/><line x1="290.4" y1="745.8" x2="324.2" y2="712.5" stroke="#808080" stroke-width="1" stroke-dasharray="4 3"/><line x1="314.4" y1="745.8" x2="348.3" y2="712.5" stroke="#808080" stroke-width="1" stroke-dasharray="4 3"/><line x1="338.5" y1="745.8" x2="372.4" y2="712.5" stroke="#808080" stroke-width="1" stroke-dasharray="4 3"/><line x1="362.6" y1="745.8" x2="396.5" y2="712.5" stroke="#808080" stroke-width="1" stroke-dasharray="4 3"/><line x1="386.6" y1="745.8" x2="420.5" y2="712.5" stroke="#808080" stroke-width="1" stroke-dasharray="4 3"/><line x1="410.7" y1="745.8" x2="444.6" y2="712.5" stroke="#808080" stroke-width="1" stroke-dasharray="4 3"/><line x1="434.8" y1="745.8" x2="468.7" y2="712.5" stroke="#808080" stroke-width="1" stroke-dasharray="4 3"/><line x1="458.8" y1="745.8" x2="492.7" y2="712.5" stroke="#808080" stroke-width="1" stroke-dasharray="4 3"/><line x1="482.9" y1="745.8" x2="516.8" y2="712.5" stroke="#808080" stroke-width="1" stroke-dasharray="4 3"/><line x1="507.0" y1="745.8" x2="540.9" y2="712.5" stroke="#808080" stroke-width="1" stroke-dasharray="4 3"/><line x1="531.0" y1="745.8" x2="564.9" y2="712.5" stroke="#808080" stroke-width="1" stroke-dasharray="4 3"/><line x1="555.1" y1="745.8" x2="589.0" y2="712.5" stroke="#808080" stroke-width="1" stroke-dasharray="4 3"/><line x1="579.2" y1="745.8" x2="613.1" y2="712.5" stroke="#808080" stroke-width="1" stroke-dasharray="4 3"/><line x1="603.3" y1="745.8" x2="637.2" y2="712.5" stroke="#808080" stroke-width="1" stroke-dasharray="4 3"/><line x1="627.3" y1="745.8" x2="661.2" y2="712.5" stroke="#808080" stroke-width="1" stroke-dasharray="4 3"/><line x1="651.4" y1="745.8" x2="685.3" y2="712.5" stroke="#808080" stroke-width="1" stroke-dasharray="4 3"/><line x1="675.5" y1="745.8" x2="709.4" y2="712.5" stroke="#808080" stroke-width="1" stroke-dasharray="4 3"/><line x1="699.5" y1="745.8" x2="733.4" y2="712.5" stroke="#808080" stroke-width="1" stroke-dasharray="4 3"/><line x1="723.6" y1="745.8" x2="757.5" y2="712.5" stroke="#808080" stroke-width="1" stroke-dasharray="4 3"/><line x1="747.7" y1="745.8" x2="781.6" y2="712.5" stroke="#808080" stroke-width="1" stroke-dasharray="4 3"/><line x1="771.8" y1="745.8" x2="805.6" y2="712.5" stroke="#808080" stroke-width="1" stroke-dasharray="4 3"/><line x1="795.8" y1="745.8" x2="829.7" y2="712.5" stroke="#808080" stroke-width="1" stroke-dasharray="4 3"/><line x1="819.9" y1="745.8" x2="853.8" y2="712.5" stroke="#808080" stroke-width="1" stroke-dasharray="4 3"/><line x1="844.0" y1="745.8" x2="877.9" y2="712.5" stroke="#808080" stroke-width="1" stroke-dasharray="4 3"/><line x1="170.0" y1="600.2" x2="204.5" y2="566.5" stroke="#000" stroke-width="1"/><line x1="204.0" y1="566.5" x2="902.0" y2="566.5" stroke="#000" stroke-width="1" shape-rendering="crispEdges"/><line x1="204.5" y1="566.5" x2="204.5" y2="712.5" stroke="#000" stroke-width="1" shape-rendering="crispEdges"/><line x1="204.5" y1="712.5" x2="901.5" y2="712.5" stroke="#000" stroke-width="1" shape-rendering="crispEdges"/><line x1="901.5" y1="566.5" x2="901.5" y2="712.5" stroke="#000" stroke-width="1" stroke-dasharray="3 3" shape-rendering="crispEdges"/><line x1="170.0" y1="745.8" x2="204.5" y2="712.5" stroke="#000" stroke-width="1"/><line x1="868.0" y1="745.8" x2="901.5" y2="712.5" stroke="#000" stroke-width="1"/><polygon points="192.6,680.8 216.7,680.8 228.0,669.7 203.9,669.7" fill="#FF0000" stroke="#000" stroke-width="1" stroke-linejoin="round"/><polygon points="216.7,680.8 240.7,680.8 252.0,669.7 228.0,669.7" fill="#FF0000" stroke="#000" stroke-width="1" stroke-linejoin="round"/><polygon points="240.7,680.8 264.8,680.8 276.1,669.7 252.0,669.7" fill="#FF0000" stroke="#000" stroke-width="1" stroke-linejoin="round"/><polygon points="264.8,680.8 288.9,680.8 300.2,669.7 276.1,669.7" fill="#FF0000" stroke="#000" stroke-width="1" stroke-linejoin="round"/><polygon points="288.9,680.8 313.0,680.8 324.2,669.7 300.2,669.7" fill="#FF0000" stroke="#000" stroke-width="1" stroke-linejoin="round"/><polygon points="313.0,680.8 337.0,680.8 348.3,669.7 324.2,669.7" fill="#FF0000" stroke="#000" stroke-width="1" stroke-linejoin="round"/><polygon points="337.0,680.8 361.1,680.8 372.4,669.7 348.3,669.7" fill="#FF0000" stroke="#000" stroke-width="1" stroke-linejoin="round"/><polygon points="361.1,680.8 385.2,680.8 396.5,669.7 372.4,669.7" fill="#FF0000" stroke="#000" stroke-width="1" stroke-linejoin="round"/><polygon points="385.2,680.8 409.2,697.9 420.5,686.8 396.5,669.7" fill="#FF0000" stroke="#000" stroke-width="1" stroke-linejoin="round"/><polygon points="409.2,697.9 433.3,680.8 444.6,669.7 420.5,686.8" fill="#FF0000" stroke="#000" stroke-width="1" stroke-linejoin="round"/><polygon points="433.3,680.8 457.4,663.6 468.7,652.5 444.6,669.7" fill="#FF0000" stroke="#000" stroke-width="1" stroke-linejoin="round"/><polygon points="457.4,663.6 481.4,680.8 492.7,669.7 468.7,652.5" fill="#FF0000" stroke="#000" stroke-width="1" stroke-linejoin="round"/><polygon points="481.4,680.8 505.5,680.8 516.8,669.7 492.7,669.7" fill="#FF0000" stroke="#000" stroke-width="1" stroke-linejoin="round"/><polygon points="505.5,680.8 529.6,680.8 540.9,669.7 516.8,669.7" fill="#FF0000" stroke="#000" stroke-width="1" stroke-linejoin="round"/><polygon points="529.6,680.8 553.6,680.8 564.9,669.7 540.9,669.7" fill="#FF0000" stroke="#000" stroke-width="1" stroke-linejoin="round"/><polygon points="553.6,680.8 577.7,680.8 589.0,669.7 564.9,669.7" fill="#FF0000" stroke="#000" stroke-width="1" stroke-linejoin="round"/><polygon points="577.7,680.8 601.8,680.8 613.1,669.7 589.0,669.7" fill="#FF0000" stroke="#000" stroke-width="1" stroke-linejoin="round"/><polygon points="601.8,680.8 625.9,697.9 637.2,686.8 613.1,669.7" fill="#FF0000" stroke="#000" stroke-width="1" stroke-linejoin="round"/><polygon points="625.9,697.9 649.9,680.8 661.2,669.7 637.2,686.8" fill="#FF0000" stroke="#000" stroke-width="1" stroke-linejoin="round"/><polygon points="649.9,680.8 674.0,680.8 685.3,669.7 661.2,669.7" fill="#FF0000" stroke="#000" stroke-width="1" stroke-linejoin="round"/><polygon points="674.0,680.8 698.1,680.8 709.4,669.7 685.3,669.7" fill="#FF0000" stroke="#000" stroke-width="1" stroke-linejoin="round"/><polygon points="698.1,680.8 722.1,697.9 733.4,686.8 709.4,669.7" fill="#FF0000" stroke="#000" stroke-width="1" stroke-linejoin="round"/><polygon points="722.1,697.9 746.2,680.8 757.5,669.7 733.4,686.8" fill="#FF0000" stroke="#000" stroke-width="1" stroke-linejoin="round"/><polygon points="746.2,680.8 770.3,680.8 781.6,669.7 757.5,669.7" fill="#FF0000" stroke="#000" stroke-width="1" stroke-linejoin="round"/><polygon points="770.3,680.8 794.4,680.8 805.6,669.7 781.6,669.7" fill="#FF0000" stroke="#000" stroke-width="1" stroke-linejoin="round"/><polygon points="794.4,680.8 818.4,680.8 829.7,669.7 805.6,669.7" fill="#FF0000" stroke="#000" stroke-width="1" stroke-linejoin="round"/><polygon points="818.4,680.8 842.5,680.8 853.8,669.7 829.7,669.7" fill="#FF0000" stroke="#000" stroke-width="1" stroke-linejoin="round"/><polygon points="842.5,680.8 866.6,680.8 877.9,669.7 853.8,669.7" fill="#FF0000" stroke="#000" stroke-width="1" stroke-linejoin="round"/><polygon points="866.6,680.8 890.6,646.5 901.9,635.4 877.9,669.7" fill="#FF0000" stroke="#000" stroke-width="1" stroke-linejoin="round"/><polygon points="181.3,691.9 205.4,691.9 216.7,680.8 192.6,680.8" fill="#008000" stroke="#000" stroke-width="1" stroke-linejoin="round"/><polygon points="205.4,691.9 229.4,691.9 240.7,680.8 216.7,680.8" fill="#008000" stroke="#000" stroke-width="1" stroke-linejoin="round"/><polygon points="229.4,691.9 253.5,691.9 264.8,680.8 240.7,680.8" fill="#008000" stroke="#000" stroke-width="1" stroke-linejoin="round"/><polygon points="253.5,691.9 277.6,691.9 288.9,680.8 264.8,680.8" fill="#008000" stroke="#000" stroke-width="1" stroke-linejoin="round"/><polygon points="277.6,691.9 301.7,691.9 313.0,680.8 288.9,680.8" fill="#008000" stroke="#000" stroke-width="1" stroke-linejoin="round"/><polygon points="301.7,691.9 325.7,691.9 337.0,680.8 313.0,680.8" fill="#008000" stroke="#000" stroke-width="1" stroke-linejoin="round"/><polygon points="325.7,691.9 349.8,623.4 361.1,612.2 337.0,680.8" fill="#003C00" stroke="#000" stroke-width="1" stroke-linejoin="round"/><polygon points="349.8,623.4 373.9,691.9 385.2,680.8 361.1,612.2" fill="#008000" stroke="#000" stroke-width="1" stroke-linejoin="round"/><polygon points="373.9,691.9 397.9,691.9 409.2,680.8 385.2,680.8" fill="#008000" stroke="#000" stroke-width="1" stroke-linejoin="round"/><polygon points="397.9,691.9 422.0,657.6 433.3,646.5 409.2,680.8" fill="#003C00" stroke="#000" stroke-width="1" stroke-linejoin="round"/><polygon points="422.0,657.6 446.1,691.9 457.4,680.8 433.3,646.5" fill="#008000" stroke="#000" stroke-width="1" stroke-linejoin="round"/><polygon points="446.1,691.9 470.1,691.9 481.4,680.8 457.4,680.8" fill="#008000" stroke="#000" stroke-width="1" stroke-linejoin="round"/><polygon points="470.1,691.9 494.2,691.9 505.5,680.8 481.4,680.8" fill="#008000" stroke="#000" stroke-width="1" stroke-linejoin="round"/><polygon points="494.2,691.9 518.3,691.9 529.6,680.8 505.5,680.8" fill="#008000" stroke="#000" stroke-width="1" stroke-linejoin="round"/><polygon points="518.3,691.9 542.3,691.9 553.6,680.8 529.6,680.8" fill="#008000" stroke="#000" stroke-width="1" stroke-linejoin="round"/><polygon points="542.3,691.9 566.4,691.9 577.7,680.8 553.6,680.8" fill="#008000" stroke="#000" stroke-width="1" stroke-linejoin="round"/><polygon points="566.4,691.9 590.5,691.9 601.8,680.8 577.7,680.8" fill="#008000" stroke="#000" stroke-width="1" stroke-linejoin="round"/><polygon points="590.5,691.9 614.6,691.9 625.9,680.8 601.8,680.8" fill="#008000" stroke="#000" stroke-width="1" stroke-linejoin="round"/><polygon points="614.6,691.9 638.6,589.1 649.9,578.0 625.9,680.8" fill="#003C00" stroke="#000" stroke-width="1" stroke-linejoin="round"/><polygon points="638.6,589.1 662.7,691.9 674.0,680.8 649.9,578.0" fill="#008000" stroke="#000" stroke-width="1" stroke-linejoin="round"/><polygon points="662.7,691.9 686.8,691.9 698.1,680.8 674.0,680.8" fill="#008000" stroke="#000" stroke-width="1" stroke-linejoin="round"/><polygon points="686.8,691.9 710.8,691.9 722.1,680.8 698.1,680.8" fill="#008000" stroke="#000" stroke-width="1" stroke-linejoin="round"/><polygon points="710.8,691.9 734.9,691.9 746.2,680.8 722.1,680.8" fill="#008000" stroke="#000" stroke-width="1" stroke-linejoin="round"/><polygon points="734.9,691.9 759.0,691.9 770.3,680.8 746.2,680.8" fill="#008000" stroke="#000" stroke-width="1" stroke-linejoin="round"/><polygon points="759.0,691.9 783.0,691.9 794.4,680.8 770.3,680.8" fill="#008000" stroke="#000" stroke-width="1" stroke-linejoin="round"/><polygon points="783.0,691.9 807.1,691.9 818.4,680.8 794.4,680.8" fill="#008000" stroke="#000" stroke-width="1" stroke-linejoin="round"/><polygon points="807.1,691.9 831.2,691.9 842.5,680.8 818.4,680.8" fill="#008000" stroke="#000" stroke-width="1" stroke-linejoin="round"/><polygon points="831.2,691.9 855.3,691.9 866.6,680.8 842.5,680.8" fill="#008000" stroke="#000" stroke-width="1" stroke-linejoin="round"/><polygon points="855.3,691.9 879.3,691.9 890.6,680.8 866.6,680.8" fill="#008000" stroke="#000" stroke-width="1" stroke-linejoin="round"/><polygon points="170.0,732.8 194.1,732.8 205.4,721.7 181.3,721.7" fill="#FFFF00" stroke="#000" stroke-width="1" stroke-linejoin="round"/><polygon points="194.1,732.8 218.1,733.1 229.4,722.0 205.4,721.7" fill="#FFFF00" stroke="#000" stroke-width="1" stroke-linejoin="round"/><polygon points="218.1,733.1 242.2,720.1 253.5,709.0 229.4,722.0" fill="#FFFF00" stroke="#000" stroke-width="1" stroke-linejoin="round"/><polygon points="242.2,720.1 266.3,720.1 277.6,709.0 253.5,709.0" fill="#FFFF00" stroke="#000" stroke-width="1" stroke-linejoin="round"/><polygon points="266.3,720.1 290.4,720.1 301.7,709.0 277.6,709.0" fill="#FFFF00" stroke="#000" stroke-width="1" stroke-linejoin="round"/><polygon points="290.4,720.1 314.4,720.1 325.7,709.0 301.7,709.0" fill="#FFFF00" stroke="#000" stroke-width="1" stroke-linejoin="round"/><polygon points="314.4,720.1 338.5,720.1 349.8,709.0 325.7,709.0" fill="#FFFF00" stroke="#000" stroke-width="1" stroke-linejoin="round"/><polygon points="338.5,720.1 362.6,720.1 373.9,709.0 349.8,709.0" fill="#FFFF00" stroke="#000" stroke-width="1" stroke-linejoin="round"/><polygon points="362.6,720.1 386.6,737.2 397.9,726.1 373.9,709.0" fill="#FFFF00" stroke="#000" stroke-width="1" stroke-linejoin="round"/><polygon points="386.6,737.2 410.7,720.1 422.0,709.0 397.9,726.1" fill="#FFFF00" stroke="#000" stroke-width="1" stroke-linejoin="round"/><polygon points="410.7,720.1 434.8,703.0 446.1,691.9 422.0,709.0" fill="#FFFF00" stroke="#000" stroke-width="1" stroke-linejoin="round"/><polygon points="434.8,703.0 458.8,720.1 470.1,709.0 446.1,691.9" fill="#FFFF00" stroke="#000" stroke-width="1" stroke-linejoin="round"/><polygon points="458.8,720.1 482.9,720.1 494.2,709.0 470.1,709.0" fill="#FFFF00" stroke="#000" stroke-width="1" stroke-linejoin="round"/><polygon points="482.9,720.1 507.0,720.1 518.3,709.0 494.2,709.0" fill="#FFFF00" stroke="#000" stroke-width="1" stroke-linejoin="round"/><polygon points="507.0,720.1 531.0,720.1 542.3,709.0 518.3,709.0" fill="#FFFF00" stroke="#000" stroke-width="1" stroke-linejoin="round"/><polygon points="531.0,720.1 555.1,720.1 566.4,709.0 542.3,709.0" fill="#FFFF00" stroke="#000" stroke-width="1" stroke-linejoin="round"/><polygon points="555.1,720.1 579.2,720.1 590.5,709.0 566.4,709.0" fill="#FFFF00" stroke="#000" stroke-width="1" stroke-linejoin="round"/><polygon points="579.2,720.1 603.3,737.2 614.6,726.1 590.5,709.0" fill="#FFFF00" stroke="#000" stroke-width="1" stroke-linejoin="round"/><polygon points="603.3,737.2 627.3,720.1 638.6,709.0 614.6,726.1" fill="#FFFF00" stroke="#000" stroke-width="1" stroke-linejoin="round"/><polygon points="627.3,720.1 651.4,720.1 662.7,709.0 638.6,709.0" fill="#FFFF00" stroke="#000" stroke-width="1" stroke-linejoin="round"/><polygon points="651.4,720.1 675.5,720.1 686.8,709.0 662.7,709.0" fill="#FFFF00" stroke="#000" stroke-width="1" stroke-linejoin="round"/><polygon points="675.5,720.1 699.5,737.2 710.8,726.1 686.8,709.0" fill="#FFFF00" stroke="#000" stroke-width="1" stroke-linejoin="round"/><polygon points="699.5,737.2 723.6,720.1 734.9,709.0 710.8,726.1" fill="#FFFF00" stroke="#000" stroke-width="1" stroke-linejoin="round"/><polygon points="723.6,720.1 747.7,745.8 759.0,734.7 734.9,709.0" fill="#FFFF00" stroke="#000" stroke-width="1" stroke-linejoin="round"/><polygon points="747.7,745.8 771.8,720.1 783.0,709.0 759.0,734.7" fill="#FFFF00" stroke="#000" stroke-width="1" stroke-linejoin="round"/><polygon points="771.8,720.1 795.8,720.1 807.1,709.0 783.0,709.0" fill="#FFFF00" stroke="#000" stroke-width="1" stroke-linejoin="round"/><polygon points="795.8,720.1 819.9,745.8 831.2,734.7 807.1,709.0" fill="#FFFF00" stroke="#000" stroke-width="1" stroke-linejoin="round"/><polygon points="819.9,745.8 844.0,745.8 855.3,734.7 831.2,734.7" fill="#FFFF00" stroke="#000" stroke-width="1" stroke-linejoin="round"/><polygon points="844.0,745.8 868.0,712.7 879.3,701.6 855.3,734.7" fill="#FFFF00" stroke="#000" stroke-width="1" stroke-linejoin="round"/><line x1="170" y1="600.2" x2="170" y2="747" stroke="#000" stroke-width="2" shape-rendering="crispEdges"/><line x1="169" y1="746" x2="868.0" y2="746" stroke="#000" stroke-width="2" shape-rendering="crispEdges"/><line x1="165" y1="737.5" x2="169" y2="737.5" stroke="#808080" stroke-width="1" shape-rendering="crispEdges"/><text x="163.0" y="741.2" text-anchor="end" font-family="Liberation Sans" font-size="11">-1</text><line x1="165" y1="720.5" x2="169" y2="720.5" stroke="#808080" stroke-width="1" shape-rendering="crispEdges"/><text x="163.0" y="724.1" text-anchor="end" font-family="Liberation Sans" font-size="11">0</text><line x1="165" y1="702.5" x2="169" y2="702.5" stroke="#808080" stroke-width="1" shape-rendering="crispEdges"/><text x="163.0" y="707.0" text-anchor="end" font-family="Liberation Sans" font-size="11">1</text><line x1="165" y1="685.5" x2="169" y2="685.5" stroke="#808080" stroke-width="1" shape-rendering="crispEdges"/><text x="163.0" y="689.8" text-anchor="end" font-family="Liberation Sans" font-size="11">2</text><line x1="165" y1="668.5" x2="169" y2="668.5" stroke="#808080" stroke-width="1" shape-rendering="crispEdges"/><text x="163.0" y="672.7" text-anchor="end" font-family="Liberation Sans" font-size="11">3</text><line x1="165" y1="651.5" x2="169" y2="651.5" stroke="#808080" stroke-width="1" shape-rendering="crispEdges"/><text x="163.0" y="655.6" text-anchor="end" font-family="Liberation Sans" font-size="11">4</text><line x1="165" y1="634.5" x2="169" y2="634.5" stroke="#808080" stroke-width="1" shape-rendering="crispEdges"/><text x="163.0" y="638.5" text-anchor="end" font-family="Liberation Sans" font-size="11">5</text><line x1="165" y1="617.5" x2="169" y2="617.5" stroke="#808080" stroke-width="1" shape-rendering="crispEdges"/><text x="163.0" y="621.3" text-anchor="end" font-family="Liberation Sans" font-size="11">6</text><line x1="165" y1="600.5" x2="169" y2="600.5" stroke="#808080" stroke-width="1" shape-rendering="crispEdges"/><text x="163.0" y="604.2" text-anchor="end" font-family="Liberation Sans" font-size="11">7</text><line x1="170.5" y1="747" x2="170.5" y2="751" stroke="#808080" stroke-width="1" shape-rendering="crispEdges"/><line x1="176.5" y1="747" x2="176.5" y2="749" stroke="#808080" stroke-width="1" shape-rendering="crispEdges"/><line x1="182.5" y1="747" x2="182.5" y2="749" stroke="#808080" stroke-width="1" shape-rendering="crispEdges"/><line x1="188.5" y1="747" x2="188.5" y2="749" stroke="#808080" stroke-width="1" shape-rendering="crispEdges"/><text x="170.0" y="763.8" text-anchor="middle" font-family="Liberation Sans" font-size="11">0</text><line x1="194.5" y1="747" x2="194.5" y2="751" stroke="#808080" stroke-width="1" shape-rendering="crispEdges"/><line x1="200.5" y1="747" x2="200.5" y2="749" stroke="#808080" stroke-width="1" shape-rendering="crispEdges"/><line x1="206.5" y1="747" x2="206.5" y2="749" stroke="#808080" stroke-width="1" shape-rendering="crispEdges"/><line x1="212.5" y1="747" x2="212.5" y2="749" stroke="#808080" stroke-width="1" shape-rendering="crispEdges"/><text x="194.1" y="763.8" text-anchor="middle" font-family="Liberation Sans" font-size="11">1</text><line x1="218.5" y1="747" x2="218.5" y2="751" stroke="#808080" stroke-width="1" shape-rendering="crispEdges"/><line x1="224.5" y1="747" x2="224.5" y2="749" stroke="#808080" stroke-width="1" shape-rendering="crispEdges"/><line x1="230.5" y1="747" x2="230.5" y2="749" stroke="#808080" stroke-width="1" shape-rendering="crispEdges"/><line x1="236.5" y1="747" x2="236.5" y2="749" stroke="#808080" stroke-width="1" shape-rendering="crispEdges"/><text x="218.1" y="763.8" text-anchor="middle" font-family="Liberation Sans" font-size="11">2</text><line x1="242.5" y1="747" x2="242.5" y2="751" stroke="#808080" stroke-width="1" shape-rendering="crispEdges"/><line x1="248.5" y1="747" x2="248.5" y2="749" stroke="#808080" stroke-width="1" shape-rendering="crispEdges"/><line x1="254.5" y1="747" x2="254.5" y2="749" stroke="#808080" stroke-width="1" shape-rendering="crispEdges"/><line x1="260.5" y1="747" x2="260.5" y2="749" stroke="#808080" stroke-width="1" shape-rendering="crispEdges"/><text x="242.2" y="763.8" text-anchor="middle" font-family="Liberation Sans" font-size="11">3</text><line x1="266.5" y1="747" x2="266.5" y2="751" stroke="#808080" stroke-width="1" shape-rendering="crispEdges"/><line x1="272.5" y1="747" x2="272.5" y2="749" stroke="#808080" stroke-width="1" shape-rendering="crispEdges"/><line x1="278.5" y1="747" x2="278.5" y2="749" stroke="#808080" stroke-width="1" shape-rendering="crispEdges"/><line x1="284.5" y1="747" x2="284.5" y2="749" stroke="#808080" stroke-width="1" shape-rendering="crispEdges"/><text x="266.3" y="763.8" text-anchor="middle" font-family="Liberation Sans" font-size="11">4</text><line x1="290.5" y1="747" x2="290.5" y2="751" stroke="#808080" stroke-width="1" shape-rendering="crispEdges"/><line x1="296.5" y1="747" x2="296.5" y2="749" stroke="#808080" stroke-width="1" shape-rendering="crispEdges"/><line x1="302.5" y1="747" x2="302.5" y2="749" stroke="#808080" stroke-width="1" shape-rendering="crispEdges"/><line x1="308.5" y1="747" x2="308.5" y2="749" stroke="#808080" stroke-width="1" shape-rendering="crispEdges"/><text x="290.4" y="763.8" text-anchor="middle" font-family="Liberation Sans" font-size="11">5</text><line x1="314.5" y1="747" x2="314.5" y2="751" stroke="#808080" stroke-width="1" shape-rendering="crispEdges"/><line x1="320.5" y1="747" x2="320.5" y2="749" stroke="#808080" stroke-width="1" shape-rendering="crispEdges"/><line x1="326.5" y1="747" x2="326.5" y2="749" stroke="#808080" stroke-width="1" shape-rendering="crispEdges"/><line x1="332.5" y1="747" x2="332.5" y2="749" stroke="#808080" stroke-width="1" shape-rendering="crispEdges"/><text x="314.4" y="763.8" text-anchor="middle" font-family="Liberation Sans" font-size="11">6</text><line x1="338.5" y1="747" x2="338.5" y2="751" stroke="#808080" stroke-width="1" shape-rendering="crispEdges"/><line x1="344.5" y1="747" x2="344.5" y2="749" stroke="#808080" stroke-width="1" shape-rendering="crispEdges"/><line x1="350.5" y1="747" x2="350.5" y2="749" stroke="#808080" stroke-width="1" shape-rendering="crispEdges"/><line x1="356.5" y1="747" x2="356.5" y2="749" stroke="#808080" stroke-width="1" shape-rendering="crispEdges"/><text x="338.5" y="763.8" text-anchor="middle" font-family="Liberation Sans" font-size="11">7</text><line x1="362.5" y1="747" x2="362.5" y2="751" stroke="#808080" stroke-width="1" shape-rendering="crispEdges"/><line x1="368.5" y1="747" x2="368.5" y2="749" stroke="#808080" stroke-width="1" shape-rendering="crispEdges"/><line x1="374.5" y1="747" x2="374.5" y2="749" stroke="#808080" stroke-width="1" shape-rendering="crispEdges"/><line x1="380.5" y1="747" x2="380.5" y2="749" stroke="#808080" stroke-width="1" shape-rendering="crispEdges"/><text x="362.6" y="763.8" text-anchor="middle" font-family="Liberation Sans" font-size="11">8</text><line x1="386.5" y1="747" x2="386.5" y2="751" stroke="#808080" stroke-width="1" shape-rendering="crispEdges"/><line x1="392.5" y1="747" x2="392.5" y2="749" stroke="#808080" stroke-width="1" shape-rendering="crispEdges"/><line x1="398.5" y1="747" x2="398.5" y2="749" stroke="#808080" stroke-width="1" shape-rendering="crispEdges"/><line x1="404.5" y1="747" x2="404.5" y2="749" stroke="#808080" stroke-width="1" shape-rendering="crispEdges"/><text x="386.6" y="763.8" text-anchor="middle" font-family="Liberation Sans" font-size="11">9</text><line x1="410.5" y1="747" x2="410.5" y2="751" stroke="#808080" stroke-width="1" shape-rendering="crispEdges"/><line x1="416.5" y1="747" x2="416.5" y2="749" stroke="#808080" stroke-width="1" shape-rendering="crispEdges"/><line x1="422.5" y1="747" x2="422.5" y2="749" stroke="#808080" stroke-width="1" shape-rendering="crispEdges"/><line x1="428.5" y1="747" x2="428.5" y2="749" stroke="#808080" stroke-width="1" shape-rendering="crispEdges"/><text x="410.7" y="763.8" text-anchor="middle" font-family="Liberation Sans" font-size="11">10</text><line x1="434.5" y1="747" x2="434.5" y2="751" stroke="#808080" stroke-width="1" shape-rendering="crispEdges"/><line x1="440.5" y1="747" x2="440.5" y2="749" stroke="#808080" stroke-width="1" shape-rendering="crispEdges"/><line x1="446.5" y1="747" x2="446.5" y2="749" stroke="#808080" stroke-width="1" shape-rendering="crispEdges"/><line x1="452.5" y1="747" x2="452.5" y2="749" stroke="#808080" stroke-width="1" shape-rendering="crispEdges"/><text x="434.8" y="763.8" text-anchor="middle" font-family="Liberation Sans" font-size="11">11</text><line x1="458.5" y1="747" x2="458.5" y2="751" stroke="#808080" stroke-width="1" shape-rendering="crispEdges"/><line x1="464.5" y1="747" x2="464.5" y2="749" stroke="#808080" stroke-width="1" shape-rendering="crispEdges"/><line x1="470.5" y1="747" x2="470.5" y2="749" stroke="#808080" stroke-width="1" shape-rendering="crispEdges"/><line x1="476.5" y1="747" x2="476.5" y2="749" stroke="#808080" stroke-width="1" shape-rendering="crispEdges"/><text x="458.8" y="763.8" text-anchor="middle" font-family="Liberation Sans" font-size="11">12</text><line x1="482.5" y1="747" x2="482.5" y2="751" stroke="#808080" stroke-width="1" shape-rendering="crispEdges"/><line x1="488.5" y1="747" x2="488.5" y2="749" stroke="#808080" stroke-width="1" shape-rendering="crispEdges"/><line x1="494.5" y1="747" x2="494.5" y2="749" stroke="#808080" stroke-width="1" shape-rendering="crispEdges"/><line x1="500.5" y1="747" x2="500.5" y2="749" stroke="#808080" stroke-width="1" shape-rendering="crispEdges"/><text x="482.9" y="763.8" text-anchor="middle" font-family="Liberation Sans" font-size="11">13</text><line x1="506.5" y1="747" x2="506.5" y2="751" stroke="#808080" stroke-width="1" shape-rendering="crispEdges"/><line x1="512.5" y1="747" x2="512.5" y2="749" stroke="#808080" stroke-width="1" shape-rendering="crispEdges"/><line x1="519.5" y1="747" x2="519.5" y2="749" stroke="#808080" stroke-width="1" shape-rendering="crispEdges"/><line x1="525.5" y1="747" x2="525.5" y2="749" stroke="#808080" stroke-width="1" shape-rendering="crispEdges"/><text x="507.0" y="763.8" text-anchor="middle" font-family="Liberation Sans" font-size="11">14</text><line x1="531.5" y1="747" x2="531.5" y2="751" stroke="#808080" stroke-width="1" shape-rendering="crispEdges"/><line x1="537.5" y1="747" x2="537.5" y2="749" stroke="#808080" stroke-width="1" shape-rendering="crispEdges"/><line x1="543.5" y1="747" x2="543.5" y2="749" stroke="#808080" stroke-width="1" shape-rendering="crispEdges"/><line x1="549.5" y1="747" x2="549.5" y2="749" stroke="#808080" stroke-width="1" shape-rendering="crispEdges"/><text x="531.0" y="763.8" text-anchor="middle" font-family="Liberation Sans" font-size="11">15</text><line x1="555.5" y1="747" x2="555.5" y2="751" stroke="#808080" stroke-width="1" shape-rendering="crispEdges"/><line x1="561.5" y1="747" x2="561.5" y2="749" stroke="#808080" stroke-width="1" shape-rendering="crispEdges"/><line x1="567.5" y1="747" x2="567.5" y2="749" stroke="#808080" stroke-width="1" shape-rendering="crispEdges"/><line x1="573.5" y1="747" x2="573.5" y2="749" stroke="#808080" stroke-width="1" shape-rendering="crispEdges"/><text x="555.1" y="763.8" text-anchor="middle" font-family="Liberation Sans" font-size="11">16</text><line x1="579.5" y1="747" x2="579.5" y2="751" stroke="#808080" stroke-width="1" shape-rendering="crispEdges"/><line x1="585.5" y1="747" x2="585.5" y2="749" stroke="#808080" stroke-width="1" shape-rendering="crispEdges"/><line x1="591.5" y1="747" x2="591.5" y2="749" stroke="#808080" stroke-width="1" shape-rendering="crispEdges"/><line x1="597.5" y1="747" x2="597.5" y2="749" stroke="#808080" stroke-width="1" shape-rendering="crispEdges"/><text x="579.2" y="763.8" text-anchor="middle" font-family="Liberation Sans" font-size="11">17</text><line x1="603.5" y1="747" x2="603.5" y2="751" stroke="#808080" stroke-width="1" shape-rendering="crispEdges"/><line x1="609.5" y1="747" x2="609.5" y2="749" stroke="#808080" stroke-width="1" shape-rendering="crispEdges"/><line x1="615.5" y1="747" x2="615.5" y2="749" stroke="#808080" stroke-width="1" shape-rendering="crispEdges"/><line x1="621.5" y1="747" x2="621.5" y2="749" stroke="#808080" stroke-width="1" shape-rendering="crispEdges"/><text x="603.3" y="763.8" text-anchor="middle" font-family="Liberation Sans" font-size="11">18</text><line x1="627.5" y1="747" x2="627.5" y2="751" stroke="#808080" stroke-width="1" shape-rendering="crispEdges"/><line x1="633.5" y1="747" x2="633.5" y2="749" stroke="#808080" stroke-width="1" shape-rendering="crispEdges"/><line x1="639.5" y1="747" x2="639.5" y2="749" stroke="#808080" stroke-width="1" shape-rendering="crispEdges"/><line x1="645.5" y1="747" x2="645.5" y2="749" stroke="#808080" stroke-width="1" shape-rendering="crispEdges"/><text x="627.3" y="763.8" text-anchor="middle" font-family="Liberation Sans" font-size="11">19</text><line x1="651.5" y1="747" x2="651.5" y2="751" stroke="#808080" stroke-width="1" shape-rendering="crispEdges"/><line x1="657.5" y1="747" x2="657.5" y2="749" stroke="#808080" stroke-width="1" shape-rendering="crispEdges"/><line x1="663.5" y1="747" x2="663.5" y2="749" stroke="#808080" stroke-width="1" shape-rendering="crispEdges"/><line x1="669.5" y1="747" x2="669.5" y2="749" stroke="#808080" stroke-width="1" shape-rendering="crispEdges"/><text x="651.4" y="763.8" text-anchor="middle" font-family="Liberation Sans" font-size="11">20</text><line x1="675.5" y1="747" x2="675.5" y2="751" stroke="#808080" stroke-width="1" shape-rendering="crispEdges"/><line x1="681.5" y1="747" x2="681.5" y2="749" stroke="#808080" stroke-width="1" shape-rendering="crispEdges"/><line x1="687.5" y1="747" x2="687.5" y2="749" stroke="#808080" stroke-width="1" shape-rendering="crispEdges"/><line x1="693.5" y1="747" x2="693.5" y2="749" stroke="#808080" stroke-width="1" shape-rendering="crispEdges"/><text x="675.5" y="763.8" text-anchor="middle" font-family="Liberation Sans" font-size="11">21</text><line x1="699.5" y1="747" x2="699.5" y2="751" stroke="#808080" stroke-width="1" shape-rendering="crispEdges"/><line x1="705.5" y1="747" x2="705.5" y2="749" stroke="#808080" stroke-width="1" shape-rendering="crispEdges"/><line x1="711.5" y1="747" x2="711.5" y2="749" stroke="#808080" stroke-width="1" shape-rendering="crispEdges"/><line x1="717.5" y1="747" x2="717.5" y2="749" stroke="#808080" stroke-width="1" shape-rendering="crispEdges"/><text x="699.5" y="763.8" text-anchor="middle" font-family="Liberation Sans" font-size="11">22</text><line x1="723.5" y1="747" x2="723.5" y2="751" stroke="#808080" stroke-width="1" shape-rendering="crispEdges"/><line x1="729.5" y1="747" x2="729.5" y2="749" stroke="#808080" stroke-width="1" shape-rendering="crispEdges"/><line x1="735.5" y1="747" x2="735.5" y2="749" stroke="#808080" stroke-width="1" shape-rendering="crispEdges"/><line x1="741.5" y1="747" x2="741.5" y2="749" stroke="#808080" stroke-width="1" shape-rendering="crispEdges"/><text x="723.6" y="763.8" text-anchor="middle" font-family="Liberation Sans" font-size="11">23</text><line x1="747.5" y1="747" x2="747.5" y2="751" stroke="#808080" stroke-width="1" shape-rendering="crispEdges"/><line x1="753.5" y1="747" x2="753.5" y2="749" stroke="#808080" stroke-width="1" shape-rendering="crispEdges"/><line x1="759.5" y1="747" x2="759.5" y2="749" stroke="#808080" stroke-width="1" shape-rendering="crispEdges"/><line x1="765.5" y1="747" x2="765.5" y2="749" stroke="#808080" stroke-width="1" shape-rendering="crispEdges"/><text x="747.7" y="763.8" text-anchor="middle" font-family="Liberation Sans" font-size="11">24</text><line x1="771.5" y1="747" x2="771.5" y2="751" stroke="#808080" stroke-width="1" shape-rendering="crispEdges"/><line x1="777.5" y1="747" x2="777.5" y2="749" stroke="#808080" stroke-width="1" shape-rendering="crispEdges"/><line x1="783.5" y1="747" x2="783.5" y2="749" stroke="#808080" stroke-width="1" shape-rendering="crispEdges"/><line x1="789.5" y1="747" x2="789.5" y2="749" stroke="#808080" stroke-width="1" shape-rendering="crispEdges"/><text x="771.8" y="763.8" text-anchor="middle" font-family="Liberation Sans" font-size="11">25</text><line x1="795.5" y1="747" x2="795.5" y2="751" stroke="#808080" stroke-width="1" shape-rendering="crispEdges"/><line x1="801.5" y1="747" x2="801.5" y2="749" stroke="#808080" stroke-width="1" shape-rendering="crispEdges"/><line x1="807.5" y1="747" x2="807.5" y2="749" stroke="#808080" stroke-width="1" shape-rendering="crispEdges"/><line x1="813.5" y1="747" x2="813.5" y2="749" stroke="#808080" stroke-width="1" shape-rendering="crispEdges"/><text x="795.8" y="763.8" text-anchor="middle" font-family="Liberation Sans" font-size="11">26</text><line x1="819.5" y1="747" x2="819.5" y2="751" stroke="#808080" stroke-width="1" shape-rendering="crispEdges"/><line x1="825.5" y1="747" x2="825.5" y2="749" stroke="#808080" stroke-width="1" shape-rendering="crispEdges"/><line x1="831.5" y1="747" x2="831.5" y2="749" stroke="#808080" stroke-width="1" shape-rendering="crispEdges"/><line x1="837.5" y1="747" x2="837.5" y2="749" stroke="#808080" stroke-width="1" shape-rendering="crispEdges"/><text x="819.9" y="763.8" text-anchor="middle" font-family="Liberation Sans" font-size="11">27</text><line x1="843.5" y1="747" x2="843.5" y2="751" stroke="#808080" stroke-width="1" shape-rendering="crispEdges"/><line x1="849.5" y1="747" x2="849.5" y2="749" stroke="#808080" stroke-width="1" shape-rendering="crispEdges"/><line x1="855.5" y1="747" x2="855.5" y2="749" stroke="#808080" stroke-width="1" shape-rendering="crispEdges"/><line x1="862.5" y1="747" x2="862.5" y2="749" stroke="#808080" stroke-width="1" shape-rendering="crispEdges"/><text x="844.0" y="763.8" text-anchor="middle" font-family="Liberation Sans" font-size="11">28</text><line x1="868.5" y1="747" x2="868.5" y2="751" stroke="#808080" stroke-width="1" shape-rendering="crispEdges"/><text x="868.0" y="763.8" text-anchor="middle" font-family="Liberation Sans" font-size="11">29</text></svg>
<div class="a" style="left:929px;top:583px;width:70px;height:45px;background:#000;"></div>
<div class="a" style="left:925px;top:579px;width:71px;height:46px;background:#fff;border:1px solid #000;"></div>
<div class="a" style="left:930px;top:583px;width:8px;height:10px;background:#FF0000;border:1px solid #000;"></div>
<div class="t" style="left:941px;top:581px;font-size:11px;letter-spacing:-0.3px;">Cena (lok.)</div>
<div class="a" style="left:930px;top:597px;width:8px;height:10px;background:#008000;border:1px solid #000;"></div>
<div class="t" style="left:941px;top:595px;font-size:11px;letter-spacing:-0.3px;">Množství</div>
<div class="a" style="left:930px;top:611px;width:8px;height:10px;background:#FFFF00;border:1px solid #000;"></div>
<div class="t" style="left:941px;top:609px;font-size:11px;letter-spacing:-0.3px;">Zisk</div></div></body></html>
